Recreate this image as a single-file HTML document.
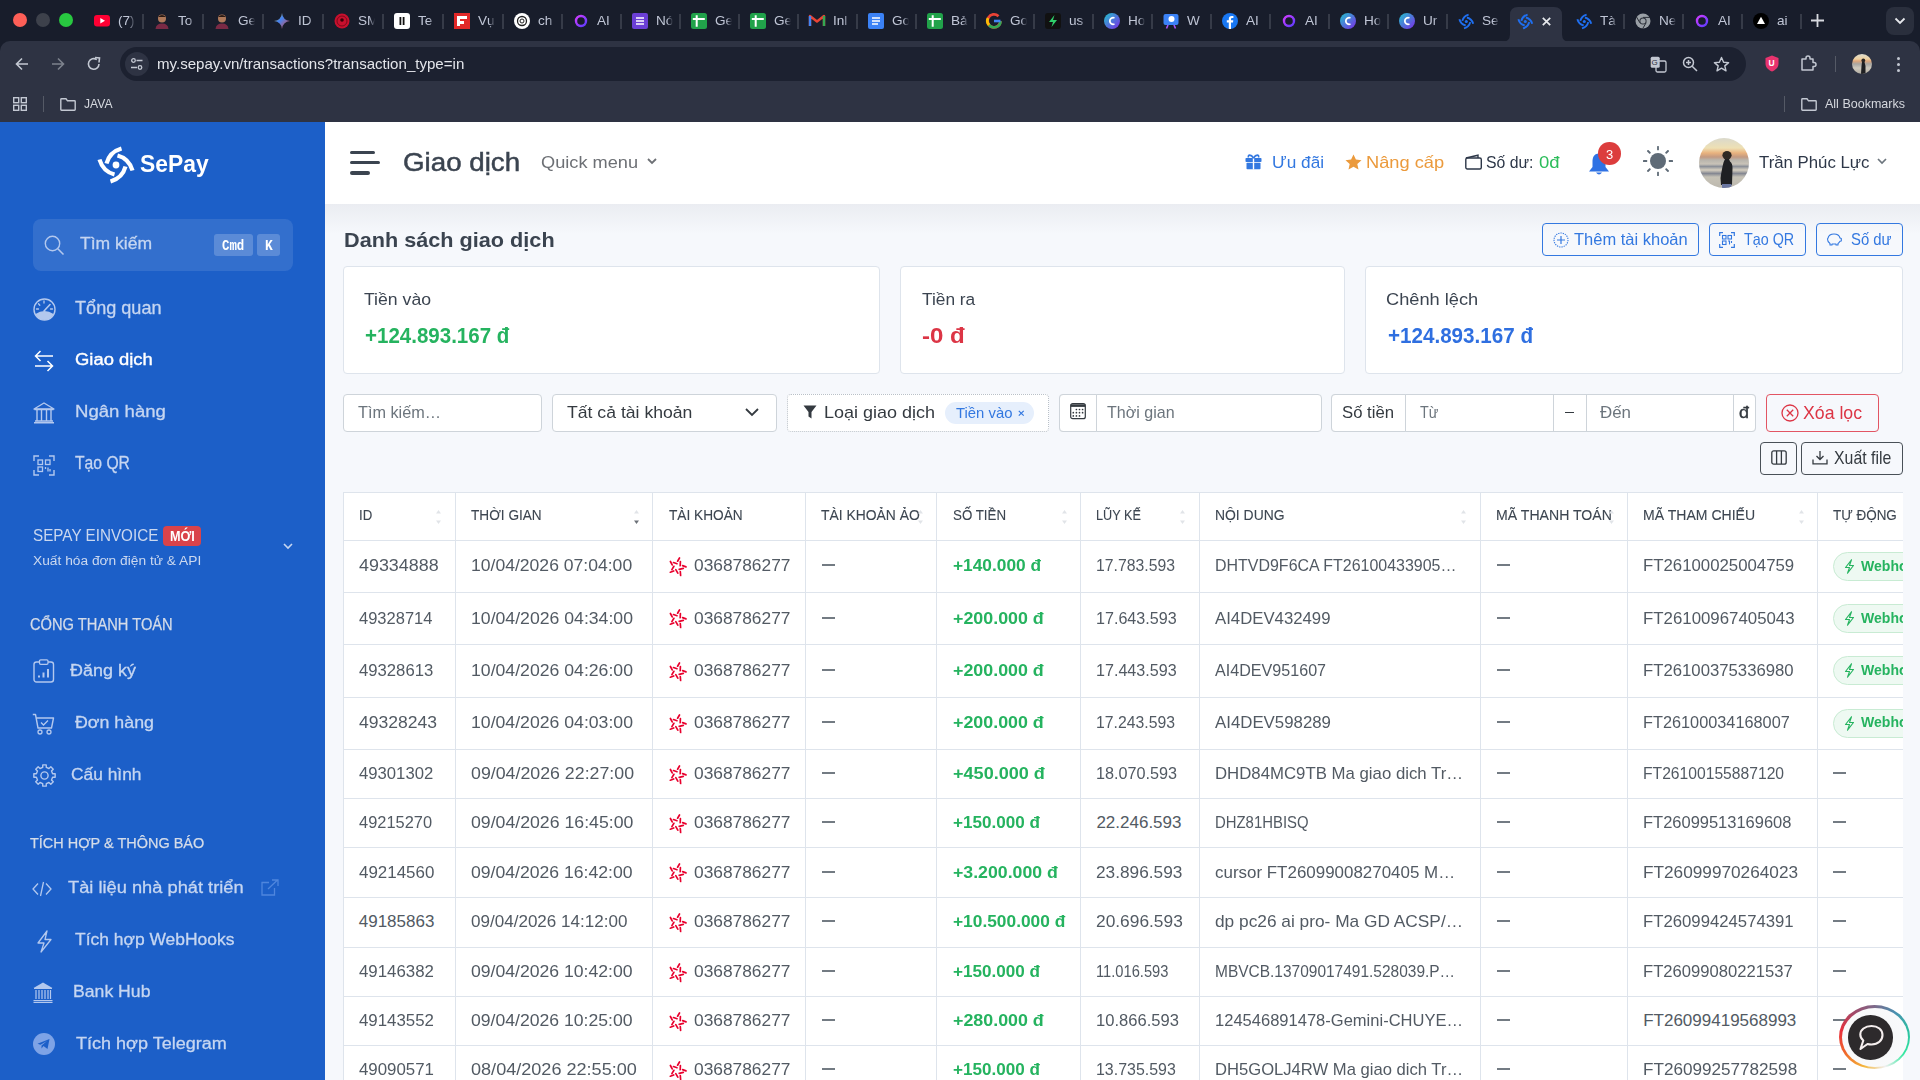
<!DOCTYPE html>
<html><head><meta charset="utf-8"><style>
html,body{margin:0;padding:0;width:1920px;height:1080px;overflow:hidden;background:#f6f8fc;font-family:"Liberation Sans", sans-serif;}
.t{position:absolute;white-space:pre;line-height:1;transform-origin:0 0;}
svg{overflow:visible}
</style></head><body>
<div style="position:absolute;left:0.00px;top:0.00px;width:1920.00px;height:60.00px;background:#181d2b"></div>
<div style="position:absolute;left:0.00px;top:41.00px;width:1920.00px;height:81.00px;background:#2e3343;border-radius:10px 10px 0 0"></div>
<div style="position:absolute;left:13.00px;top:13.00px;width:14.00px;height:14.00px;background:#fe5f57;border-radius:50%"></div>
<div style="position:absolute;left:36.00px;top:13.00px;width:14.00px;height:14.00px;background:#3d414b;border-radius:50%"></div>
<div style="position:absolute;left:59.00px;top:13.00px;width:14.00px;height:14.00px;background:#28c840;border-radius:50%"></div>
<svg style="position:absolute;left:94.00px;top:14.50px;" width="16" height="12" viewBox="0 0 16 12"><rect x="0" y="0" width="16" height="11.5" rx="3" fill="#ff0033"/><path d="M6.3 3 L11 5.8 L6.3 8.6 Z" fill="#fff"/></svg>
<div style="position:absolute;left:118.00px;top:10px;width:17px;height:22px;overflow:hidden;-webkit-mask-image:linear-gradient(to right,#000 65%,transparent 100%)"><div class="t" style="left:0;top:3.5px;font-size:13.6px;color:#c0c6d6;">(7)</div></div>
<div style="position:absolute;left:142.00px;top:14.00px;width:2.00px;height:15.00px;background:#363b48"></div>
<svg style="position:absolute;left:154.00px;top:12.50px;" width="16" height="16" viewBox="0 0 16 16"><circle cx="8" cy="5.5" r="4" fill="#b07a5a"/><path d="M4 4 Q8 0 12 4" fill="#2a1a14"/><path d="M1.5 16 Q2 10.5 8 10.5 Q14 10.5 14.5 16 Z" fill="#7a2a45"/></svg>
<div style="position:absolute;left:178.00px;top:10px;width:17px;height:22px;overflow:hidden;-webkit-mask-image:linear-gradient(to right,#000 65%,transparent 100%)"><div class="t" style="left:0;top:3.5px;font-size:13.6px;color:#c0c6d6;">To</div></div>
<div style="position:absolute;left:202.00px;top:14.00px;width:2.00px;height:15.00px;background:#363b48"></div>
<svg style="position:absolute;left:214.00px;top:12.50px;" width="16" height="16" viewBox="0 0 16 16"><circle cx="8" cy="5.5" r="4" fill="#b07a5a"/><path d="M4 4 Q8 0 12 4" fill="#2a1a14"/><path d="M1.5 16 Q2 10.5 8 10.5 Q14 10.5 14.5 16 Z" fill="#7a2a45"/></svg>
<div style="position:absolute;left:238.00px;top:10px;width:17px;height:22px;overflow:hidden;-webkit-mask-image:linear-gradient(to right,#000 65%,transparent 100%)"><div class="t" style="left:0;top:3.5px;font-size:13.6px;color:#c0c6d6;">Ge</div></div>
<div style="position:absolute;left:262.00px;top:14.00px;width:2.00px;height:15.00px;background:#363b48"></div>
<svg style="position:absolute;left:274.00px;top:12.50px;" width="16" height="16" viewBox="0 0 16 16"><defs><linearGradient id="gg" x1="0" y1="0" x2="1" y2="1"><stop offset="0" stop-color="#f4b400"/><stop offset="0.4" stop-color="#4285f4"/><stop offset="1" stop-color="#ea4335"/></linearGradient></defs><path d="M8 0 Q8.8 7.2 16 8 Q8.8 8.8 8 16 Q7.2 8.8 0 8 Q7.2 7.2 8 0 Z" fill="url(#gg)"/></svg>
<div style="position:absolute;left:298.00px;top:10px;width:17px;height:22px;overflow:hidden;-webkit-mask-image:linear-gradient(to right,#000 65%,transparent 100%)"><div class="t" style="left:0;top:3.5px;font-size:13.6px;color:#c0c6d6;">ID</div></div>
<div style="position:absolute;left:322.00px;top:14.00px;width:2.00px;height:15.00px;background:#363b48"></div>
<svg style="position:absolute;left:334.00px;top:12.50px;" width="16" height="16" viewBox="0 0 16 16"><circle cx="8" cy="8" r="7.5" fill="#c8102e"/><circle cx="8" cy="8" r="5" fill="none" stroke="#7a0a18" stroke-width="1"/><circle cx="8" cy="7" r="1.8" fill="#3a0008"/></svg>
<div style="position:absolute;left:358.00px;top:10px;width:17px;height:22px;overflow:hidden;-webkit-mask-image:linear-gradient(to right,#000 65%,transparent 100%)"><div class="t" style="left:0;top:3.5px;font-size:13.6px;color:#c0c6d6;">SM</div></div>
<div style="position:absolute;left:382.00px;top:14.00px;width:2.00px;height:15.00px;background:#363b48"></div>
<svg style="position:absolute;left:394.00px;top:12.50px;" width="16" height="16" viewBox="0 0 16 16"><rect width="16" height="16" rx="3" fill="#fff"/><rect x="5.5" y="4" width="1.8" height="8" fill="#111"/><rect x="8.7" y="4" width="1.8" height="8" fill="#111"/></svg>
<div style="position:absolute;left:418.00px;top:10px;width:17px;height:22px;overflow:hidden;-webkit-mask-image:linear-gradient(to right,#000 65%,transparent 100%)"><div class="t" style="left:0;top:3.5px;font-size:13.6px;color:#c0c6d6;">Te</div></div>
<div style="position:absolute;left:442.00px;top:14.00px;width:2.00px;height:15.00px;background:#363b48"></div>
<svg style="position:absolute;left:454.00px;top:12.50px;" width="16" height="16" viewBox="0 0 16 16"><rect width="16" height="16" fill="#e12828"/><path d="M3 3 H13 V6 H6 V8 H10 V11 H6 V13 H3 Z" fill="#fff"/></svg>
<div style="position:absolute;left:478.00px;top:10px;width:17px;height:22px;overflow:hidden;-webkit-mask-image:linear-gradient(to right,#000 65%,transparent 100%)"><div class="t" style="left:0;top:3.5px;font-size:13.6px;color:#c0c6d6;">Vụ</div></div>
<div style="position:absolute;left:502.00px;top:14.00px;width:2.00px;height:15.00px;background:#363b48"></div>
<svg style="position:absolute;left:514.00px;top:12.50px;" width="16" height="16" viewBox="0 0 16 16"><circle cx="8" cy="8" r="8" fill="#fff"/><circle cx="8" cy="8" r="4.5" fill="none" stroke="#222" stroke-width="1.3"/><circle cx="8" cy="8" r="2" fill="none" stroke="#222" stroke-width="1"/></svg>
<div style="position:absolute;left:538.00px;top:10px;width:17px;height:22px;overflow:hidden;-webkit-mask-image:linear-gradient(to right,#000 65%,transparent 100%)"><div class="t" style="left:0;top:3.5px;font-size:13.6px;color:#c0c6d6;">ch</div></div>
<div style="position:absolute;left:561.00px;top:14.00px;width:2.00px;height:15.00px;background:#363b48"></div>
<svg style="position:absolute;left:573.00px;top:12.50px;" width="16" height="16" viewBox="0 0 16 16"><defs><linearGradient id="rg" x1="0" y1="0" x2="1" y2="1"><stop offset="0" stop-color="#d23cff"/><stop offset="1" stop-color="#5b3cff"/></linearGradient></defs><circle cx="8" cy="8" r="5" fill="none" stroke="url(#rg)" stroke-width="2.4"/></svg>
<div style="position:absolute;left:597.00px;top:10px;width:17px;height:22px;overflow:hidden;-webkit-mask-image:linear-gradient(to right,#000 65%,transparent 100%)"><div class="t" style="left:0;top:3.5px;font-size:13.6px;color:#c0c6d6;">AI</div></div>
<div style="position:absolute;left:620.00px;top:14.00px;width:2.00px;height:15.00px;background:#363b48"></div>
<svg style="position:absolute;left:632.00px;top:12.50px;" width="16" height="16" viewBox="0 0 16 16"><rect width="16" height="16" rx="2" fill="#6b3fd6"/><path d="M4 5 H12 M4 8 H12 M4 11 H12" stroke="#fff" stroke-width="1.4"/></svg>
<div style="position:absolute;left:656.00px;top:10px;width:17px;height:22px;overflow:hidden;-webkit-mask-image:linear-gradient(to right,#000 65%,transparent 100%)"><div class="t" style="left:0;top:3.5px;font-size:13.6px;color:#c0c6d6;">Nó</div></div>
<div style="position:absolute;left:679.00px;top:14.00px;width:2.00px;height:15.00px;background:#363b48"></div>
<svg style="position:absolute;left:691.00px;top:12.50px;" width="16" height="16" viewBox="0 0 16 16"><rect width="16" height="16" rx="2.5" fill="#21a24a"/><path d="M1.8 5.9 H13.8 M5.7 2.2 V13.8" stroke="#fff" stroke-width="2"/></svg>
<div style="position:absolute;left:715.00px;top:10px;width:17px;height:22px;overflow:hidden;-webkit-mask-image:linear-gradient(to right,#000 65%,transparent 100%)"><div class="t" style="left:0;top:3.5px;font-size:13.6px;color:#c0c6d6;">Ge</div></div>
<div style="position:absolute;left:738.00px;top:14.00px;width:2.00px;height:15.00px;background:#363b48"></div>
<svg style="position:absolute;left:750.00px;top:12.50px;" width="16" height="16" viewBox="0 0 16 16"><rect width="16" height="16" rx="2.5" fill="#21a24a"/><path d="M1.8 5.9 H13.8 M5.7 2.2 V13.8" stroke="#fff" stroke-width="2"/></svg>
<div style="position:absolute;left:774.00px;top:10px;width:17px;height:22px;overflow:hidden;-webkit-mask-image:linear-gradient(to right,#000 65%,transparent 100%)"><div class="t" style="left:0;top:3.5px;font-size:13.6px;color:#c0c6d6;">Ge</div></div>
<div style="position:absolute;left:797.00px;top:14.00px;width:2.00px;height:15.00px;background:#363b48"></div>
<svg style="position:absolute;left:809.00px;top:14.00px;" width="16" height="13" viewBox="0 0 16 13"><path d="M1 12 V2 L8 7.5 L15 2 V12" fill="none" stroke="#ea4335" stroke-width="2.4" stroke-linejoin="round"/><path d="M1 12 V2" stroke="#4285f4" stroke-width="2.4"/><path d="M15 12 V2" stroke="#34a853" stroke-width="2.4"/></svg>
<div style="position:absolute;left:833.00px;top:10px;width:17px;height:22px;overflow:hidden;-webkit-mask-image:linear-gradient(to right,#000 65%,transparent 100%)"><div class="t" style="left:0;top:3.5px;font-size:13.6px;color:#c0c6d6;">Inl</div></div>
<div style="position:absolute;left:856.00px;top:14.00px;width:2.00px;height:15.00px;background:#363b48"></div>
<svg style="position:absolute;left:868.00px;top:12.50px;" width="16" height="16" viewBox="0 0 16 16"><rect width="16" height="16" rx="2" fill="#3b82f6"/><path d="M4 5 H12 M4 8 H12 M4 11 H10" stroke="#fff" stroke-width="1.5"/></svg>
<div style="position:absolute;left:892.00px;top:10px;width:17px;height:22px;overflow:hidden;-webkit-mask-image:linear-gradient(to right,#000 65%,transparent 100%)"><div class="t" style="left:0;top:3.5px;font-size:13.6px;color:#c0c6d6;">Go</div></div>
<div style="position:absolute;left:915.00px;top:14.00px;width:2.00px;height:15.00px;background:#363b48"></div>
<svg style="position:absolute;left:927.00px;top:12.50px;" width="16" height="16" viewBox="0 0 16 16"><rect width="16" height="16" rx="2.5" fill="#21a24a"/><path d="M1.8 5.9 H13.8 M5.7 2.2 V13.8" stroke="#fff" stroke-width="2"/></svg>
<div style="position:absolute;left:951.00px;top:10px;width:17px;height:22px;overflow:hidden;-webkit-mask-image:linear-gradient(to right,#000 65%,transparent 100%)"><div class="t" style="left:0;top:3.5px;font-size:13.6px;color:#c0c6d6;">Bả</div></div>
<div style="position:absolute;left:974.00px;top:14.00px;width:2.00px;height:15.00px;background:#363b48"></div>
<svg style="position:absolute;left:986.00px;top:12.50px;" width="16" height="16" viewBox="0 0 16 16"><path d="M14.5 8.2 A6.5 6.5 0 1 1 12.5 3.2" fill="none" stroke="#ea4335" stroke-width="2.8"/><path d="M14.5 8.2 A6.5 6.5 0 0 1 3 12" fill="none" stroke="#34a853" stroke-width="2.8"/><path d="M3 12 A6.5 6.5 0 0 1 2 5" fill="none" stroke="#fbbc05" stroke-width="2.8"/><path d="M8 8 H14.5" stroke="#4285f4" stroke-width="2.6"/></svg>
<div style="position:absolute;left:1010.00px;top:10px;width:17px;height:22px;overflow:hidden;-webkit-mask-image:linear-gradient(to right,#000 65%,transparent 100%)"><div class="t" style="left:0;top:3.5px;font-size:13.6px;color:#c0c6d6;">Go</div></div>
<div style="position:absolute;left:1033.00px;top:14.00px;width:2.00px;height:15.00px;background:#363b48"></div>
<svg style="position:absolute;left:1045.00px;top:12.50px;" width="16" height="16" viewBox="0 0 16 16"><rect width="16" height="16" rx="3" fill="#111"/><path d="M9.5 2 L4 9 H8 L6.5 14 L12 7 H8 Z" fill="#2fd06b"/></svg>
<div style="position:absolute;left:1069.00px;top:10px;width:17px;height:22px;overflow:hidden;-webkit-mask-image:linear-gradient(to right,#000 65%,transparent 100%)"><div class="t" style="left:0;top:3.5px;font-size:13.6px;color:#c0c6d6;">us</div></div>
<div style="position:absolute;left:1092.00px;top:14.00px;width:2.00px;height:15.00px;background:#363b48"></div>
<svg style="position:absolute;left:1104.00px;top:12.50px;" width="16" height="16" viewBox="0 0 16 16"><defs><linearGradient id="cg" x1="0" y1="0" x2="1" y2="1"><stop offset="0" stop-color="#20c4cb"/><stop offset="1" stop-color="#7d2ae8"/></linearGradient></defs><circle cx="8" cy="8" r="8" fill="url(#cg)"/><path d="M10.5 5 A3.3 3.3 0 1 0 10.5 11" fill="none" stroke="#fff" stroke-width="1.8"/></svg>
<div style="position:absolute;left:1128.00px;top:10px;width:17px;height:22px;overflow:hidden;-webkit-mask-image:linear-gradient(to right,#000 65%,transparent 100%)"><div class="t" style="left:0;top:3.5px;font-size:13.6px;color:#c0c6d6;">Ho</div></div>
<div style="position:absolute;left:1151.00px;top:14.00px;width:2.00px;height:15.00px;background:#363b48"></div>
<svg style="position:absolute;left:1163.00px;top:12.50px;" width="16" height="16" viewBox="0 0 16 16"><rect x="0.5" y="1" width="15" height="11" rx="2" fill="#3b82f6"/><circle cx="8.5" cy="6" r="3" fill="#fff"/><path d="M5 12 L3.5 15.5 M11 12 L12.5 15.5" stroke="#a855f7" stroke-width="1.6"/></svg>
<div style="position:absolute;left:1187.00px;top:10px;width:17px;height:22px;overflow:hidden;-webkit-mask-image:linear-gradient(to right,#000 65%,transparent 100%)"><div class="t" style="left:0;top:3.5px;font-size:13.6px;color:#c0c6d6;">W</div></div>
<div style="position:absolute;left:1210.00px;top:14.00px;width:2.00px;height:15.00px;background:#363b48"></div>
<svg style="position:absolute;left:1222.00px;top:12.50px;" width="16" height="16" viewBox="0 0 16 16"><circle cx="8" cy="8" r="8" fill="#1877f2"/><path d="M9 16 V9.5 H11 L11.3 7.3 H9 V6 Q9 5 10 5 H11.4 V3.1 Q10.6 3 9.7 3 Q6.8 3 6.8 6 V7.3 H4.8 V9.5 H6.8 V16 Z" fill="#fff"/></svg>
<div style="position:absolute;left:1246.00px;top:10px;width:17px;height:22px;overflow:hidden;-webkit-mask-image:linear-gradient(to right,#000 65%,transparent 100%)"><div class="t" style="left:0;top:3.5px;font-size:13.6px;color:#c0c6d6;">AI</div></div>
<div style="position:absolute;left:1269.00px;top:14.00px;width:2.00px;height:15.00px;background:#363b48"></div>
<svg style="position:absolute;left:1281.00px;top:12.50px;" width="16" height="16" viewBox="0 0 16 16"><defs><linearGradient id="rg" x1="0" y1="0" x2="1" y2="1"><stop offset="0" stop-color="#d23cff"/><stop offset="1" stop-color="#5b3cff"/></linearGradient></defs><circle cx="8" cy="8" r="5" fill="none" stroke="url(#rg)" stroke-width="2.4"/></svg>
<div style="position:absolute;left:1305.00px;top:10px;width:17px;height:22px;overflow:hidden;-webkit-mask-image:linear-gradient(to right,#000 65%,transparent 100%)"><div class="t" style="left:0;top:3.5px;font-size:13.6px;color:#c0c6d6;">AI</div></div>
<div style="position:absolute;left:1328.00px;top:14.00px;width:2.00px;height:15.00px;background:#363b48"></div>
<svg style="position:absolute;left:1340.00px;top:12.50px;" width="16" height="16" viewBox="0 0 16 16"><defs><linearGradient id="cg" x1="0" y1="0" x2="1" y2="1"><stop offset="0" stop-color="#20c4cb"/><stop offset="1" stop-color="#7d2ae8"/></linearGradient></defs><circle cx="8" cy="8" r="8" fill="url(#cg)"/><path d="M10.5 5 A3.3 3.3 0 1 0 10.5 11" fill="none" stroke="#fff" stroke-width="1.8"/></svg>
<div style="position:absolute;left:1364.00px;top:10px;width:17px;height:22px;overflow:hidden;-webkit-mask-image:linear-gradient(to right,#000 65%,transparent 100%)"><div class="t" style="left:0;top:3.5px;font-size:13.6px;color:#c0c6d6;">Ho</div></div>
<div style="position:absolute;left:1387.00px;top:14.00px;width:2.00px;height:15.00px;background:#363b48"></div>
<svg style="position:absolute;left:1399.00px;top:12.50px;" width="16" height="16" viewBox="0 0 16 16"><defs><linearGradient id="cg" x1="0" y1="0" x2="1" y2="1"><stop offset="0" stop-color="#20c4cb"/><stop offset="1" stop-color="#7d2ae8"/></linearGradient></defs><circle cx="8" cy="8" r="8" fill="url(#cg)"/><path d="M10.5 5 A3.3 3.3 0 1 0 10.5 11" fill="none" stroke="#fff" stroke-width="1.8"/></svg>
<div style="position:absolute;left:1423.00px;top:10px;width:17px;height:22px;overflow:hidden;-webkit-mask-image:linear-gradient(to right,#000 65%,transparent 100%)"><div class="t" style="left:0;top:3.5px;font-size:13.6px;color:#c0c6d6;">Ur</div></div>
<div style="position:absolute;left:1446.00px;top:14.00px;width:2.00px;height:15.00px;background:#363b48"></div>
<svg style="position:absolute;left:1458.00px;top:12.50px;" width="16" height="16" viewBox="0 0 16 16"><g transform="translate(8.3 8.5) scale(0.42)"><g transform="rotate(0)"><path d="M-9.5 -1.5 Q-6.5 -13 5.5 -16.5" stroke="#1f6ff0" stroke-width="4.6" fill="none"/></g><g transform="rotate(90)"><path d="M-9.5 -1.5 Q-6.5 -13 5.5 -16.5" stroke="#1f6ff0" stroke-width="4.6" fill="none"/></g><g transform="rotate(180)"><path d="M-9.5 -1.5 Q-6.5 -13 5.5 -16.5" stroke="#1f6ff0" stroke-width="4.6" fill="none"/></g><g transform="rotate(270)"><path d="M-9.5 -1.5 Q-6.5 -13 5.5 -16.5" stroke="#1f6ff0" stroke-width="4.6" fill="none"/></g><circle r="3.6" fill="#1f6ff0"/></g></svg>
<div style="position:absolute;left:1482.00px;top:10px;width:17px;height:22px;overflow:hidden;-webkit-mask-image:linear-gradient(to right,#000 65%,transparent 100%)"><div class="t" style="left:0;top:3.5px;font-size:13.6px;color:#c0c6d6;">Se</div></div>
<svg style="position:absolute;left:1502.00px;top:7px" width="68" height="35" viewBox="0 0 68 35"><path d="M0 35 Q8 35 8 27 L8 8 Q8 0 16 0 L52 0 Q60 0 60 8 L60 27 Q60 35 68 35 Z" fill="#2e3343"/></svg>
<svg style="position:absolute;left:1517.00px;top:12.50px;" width="16" height="16" viewBox="0 0 16 16"><g transform="translate(8.3 8.5) scale(0.42)"><g transform="rotate(0)"><path d="M-9.5 -1.5 Q-6.5 -13 5.5 -16.5" stroke="#1f6ff0" stroke-width="4.6" fill="none"/></g><g transform="rotate(90)"><path d="M-9.5 -1.5 Q-6.5 -13 5.5 -16.5" stroke="#1f6ff0" stroke-width="4.6" fill="none"/></g><g transform="rotate(180)"><path d="M-9.5 -1.5 Q-6.5 -13 5.5 -16.5" stroke="#1f6ff0" stroke-width="4.6" fill="none"/></g><g transform="rotate(270)"><path d="M-9.5 -1.5 Q-6.5 -13 5.5 -16.5" stroke="#1f6ff0" stroke-width="4.6" fill="none"/></g><circle r="3.6" fill="#1f6ff0"/></g></svg>
<svg style="position:absolute;left:1541.50px;top:16.50px;" width="9" height="9" viewBox="0 0 9 9"><path d="M0.8 0.8 L8.2 8.2 M8.2 0.8 L0.8 8.2" stroke="#e6e8ec" stroke-width="1.7"/></svg>
<svg style="position:absolute;left:1576.00px;top:12.50px;" width="16" height="16" viewBox="0 0 16 16"><g transform="translate(8.3 8.5) scale(0.42)"><g transform="rotate(0)"><path d="M-9.5 -1.5 Q-6.5 -13 5.5 -16.5" stroke="#1f6ff0" stroke-width="4.6" fill="none"/></g><g transform="rotate(90)"><path d="M-9.5 -1.5 Q-6.5 -13 5.5 -16.5" stroke="#1f6ff0" stroke-width="4.6" fill="none"/></g><g transform="rotate(180)"><path d="M-9.5 -1.5 Q-6.5 -13 5.5 -16.5" stroke="#1f6ff0" stroke-width="4.6" fill="none"/></g><g transform="rotate(270)"><path d="M-9.5 -1.5 Q-6.5 -13 5.5 -16.5" stroke="#1f6ff0" stroke-width="4.6" fill="none"/></g><circle r="3.6" fill="#1f6ff0"/></g></svg>
<div style="position:absolute;left:1600.00px;top:10px;width:17px;height:22px;overflow:hidden;-webkit-mask-image:linear-gradient(to right,#000 65%,transparent 100%)"><div class="t" style="left:0;top:3.5px;font-size:13.6px;color:#c0c6d6;">Tà</div></div>
<div style="position:absolute;left:1623.00px;top:14.00px;width:2.00px;height:15.00px;background:#363b48"></div>
<svg style="position:absolute;left:1635.00px;top:12.50px;" width="16" height="16" viewBox="0 0 16 16"><circle cx="8" cy="8" r="7.5" fill="#9aa0a6"/><circle cx="8" cy="8" r="3.6" fill="#2b2f38"/><circle cx="8" cy="8" r="2.6" fill="#9aa0a6"/><path d="M8 4.4 H15 M4.9 9.8 L1.4 3.8 M11.1 9.8 L7.6 15.8" stroke="#2b2f38" stroke-width="1"/></svg>
<div style="position:absolute;left:1659.00px;top:10px;width:17px;height:22px;overflow:hidden;-webkit-mask-image:linear-gradient(to right,#000 65%,transparent 100%)"><div class="t" style="left:0;top:3.5px;font-size:13.6px;color:#c0c6d6;">Ne</div></div>
<div style="position:absolute;left:1682.00px;top:14.00px;width:2.00px;height:15.00px;background:#363b48"></div>
<svg style="position:absolute;left:1694.00px;top:12.50px;" width="16" height="16" viewBox="0 0 16 16"><defs><linearGradient id="rg" x1="0" y1="0" x2="1" y2="1"><stop offset="0" stop-color="#d23cff"/><stop offset="1" stop-color="#5b3cff"/></linearGradient></defs><circle cx="8" cy="8" r="5" fill="none" stroke="url(#rg)" stroke-width="2.4"/></svg>
<div style="position:absolute;left:1718.00px;top:10px;width:17px;height:22px;overflow:hidden;-webkit-mask-image:linear-gradient(to right,#000 65%,transparent 100%)"><div class="t" style="left:0;top:3.5px;font-size:13.6px;color:#c0c6d6;">AI</div></div>
<div style="position:absolute;left:1741.00px;top:14.00px;width:2.00px;height:15.00px;background:#363b48"></div>
<svg style="position:absolute;left:1753.00px;top:12.50px;" width="16" height="16" viewBox="0 0 16 16"><circle cx="8" cy="8" r="8" fill="#000"/><path d="M8 3.8 L12 11 H4 Z" fill="#fff"/></svg>
<div style="position:absolute;left:1777.00px;top:10px;width:17px;height:22px;overflow:hidden;-webkit-mask-image:linear-gradient(to right,#000 65%,transparent 100%)"><div class="t" style="left:0;top:3.5px;font-size:13.6px;color:#c0c6d6;">ai</div></div>
<div style="position:absolute;left:1800.00px;top:14.00px;width:2.00px;height:15.00px;background:#363b48"></div>
<svg style="position:absolute;left:1810.00px;top:13.00px;" width="15" height="15" viewBox="0 0 15 15"><path d="M7.5 1 V14 M1 7.5 H14" stroke="#d7dae0" stroke-width="1.8"/></svg>
<div style="position:absolute;left:1886.00px;top:7.00px;width:28.00px;height:28.00px;background:#2a2f3d;border-radius:8px"></div>
<svg style="position:absolute;left:1894.00px;top:17.00px;" width="12" height="8" viewBox="0 0 12 8"><path d="M1.5 1.5 L6 6 L10.5 1.5" stroke="#e6e8ec" stroke-width="1.8" fill="none"/></svg>
<svg style="position:absolute;left:15.00px;top:57.00px;" width="14" height="14" viewBox="0 0 14 14"><path d="M13 7 H2 M7 1.5 L1.5 7 L7 12.5" stroke="#c3c8d2" stroke-width="1.6" fill="none"/></svg>
<svg style="position:absolute;left:51.00px;top:57.00px;" width="14" height="14" viewBox="0 0 14 14"><path d="M1 7 H12 M7 1.5 L12.5 7 L7 12.5" stroke="#7d828d" stroke-width="1.6" fill="none"/></svg>
<svg style="position:absolute;left:87.00px;top:57.00px;" width="14" height="14" viewBox="0 0 14 14"><path d="M12 7 A5.3 5.3 0 1 1 9.8 2.6" stroke="#c3c8d2" stroke-width="1.6" fill="none"/><path d="M8 0.5 L12.5 1 L12 5.5" stroke="#c3c8d2" stroke-width="1.6" fill="none"/></svg>
<div style="position:absolute;left:120.00px;top:47.00px;width:1626.00px;height:34.00px;background:#1c2130;border-radius:17px"></div>
<div style="position:absolute;left:125.00px;top:52.00px;width:24.00px;height:24.00px;background:#2e3343;border-radius:50%"></div>
<svg style="position:absolute;left:130.00px;top:57.00px;" width="14" height="14" viewBox="0 0 14 14"><circle cx="3.5" cy="3.5" r="1.8" stroke="#c3c8d2" stroke-width="1.3" fill="none"/><path d="M6.5 3.5 H12.5 M1 10.5 H7" stroke="#c3c8d2" stroke-width="1.3"/><circle cx="10" cy="10.5" r="1.8" stroke="#c3c8d2" stroke-width="1.3" fill="none"/></svg>
<div class="t" style="left:157.00px;top:56.75px;font-size:14.97px;color:#e3e5ea;transform:scaleX(1.0067);">my.sepay.vn/transactions?transaction_type=in</div>
<svg style="position:absolute;left:1650.00px;top:56.00px;" width="17" height="17" viewBox="0 0 17 17"><rect x="0.7" y="0.7" width="9" height="11" rx="1.5" fill="#c3c8d2"/><rect x="6" y="5" width="10" height="11" rx="1.5" fill="none" stroke="#c3c8d2" stroke-width="1.3"/><text x="1.5" y="9" font-size="8" fill="#2c313e" font-family="Liberation Sans">G</text></svg>
<svg style="position:absolute;left:1682.00px;top:56.00px;" width="17" height="17" viewBox="0 0 17 17"><circle cx="6.5" cy="6.5" r="5" stroke="#c3c8d2" stroke-width="1.5" fill="none"/><path d="M10.2 10.2 L15 15 M6.5 4 V9 M4 6.5 H9" stroke="#c3c8d2" stroke-width="1.5"/></svg>
<svg style="position:absolute;left:1713.00px;top:56.00px;" width="17" height="17" viewBox="0 0 17 17"><path d="M8.5 1.5 L10.6 6.2 L15.6 6.6 L11.8 9.9 L13 14.8 L8.5 12.2 L4 14.8 L5.2 9.9 L1.4 6.6 L6.4 6.2 Z" stroke="#c3c8d2" stroke-width="1.4" fill="none" stroke-linejoin="round"/></svg>
<svg style="position:absolute;left:1765.00px;top:55.00px;" width="14" height="17" viewBox="0 0 14 17"><path d="M7 0.5 L13.5 3 V8.5 C13.5 12.5 10.5 15 7 16.5 C3.5 15 0.5 12.5 0.5 8.5 V3 Z" fill="#e8336e"/><text x="3.6" y="11.2" font-size="8.5" font-weight="bold" fill="#fff" font-family="Liberation Sans">U</text></svg>
<svg style="position:absolute;left:1800.00px;top:55.00px;" width="17" height="17" viewBox="0 0 17 17"><path d="M2 4 H6 V3 A2 2 0 0 1 10 3 V4 H13 V7.5 H14 A2 2 0 0 1 14 11.5 H13 V15 H2 Z" stroke="#c3c8d2" stroke-width="1.5" fill="none" stroke-linejoin="round"/></svg>
<div style="position:absolute;left:1835.00px;top:56.00px;width:1.00px;height:16.00px;background:#555a66"></div>
<svg style="position:absolute;left:1852.00px;top:54.00px;" width="20" height="20" viewBox="0 0 20 20"><defs><clipPath id="avs"><circle cx="10" cy="10" r="10"/></clipPath><linearGradient id="avsg" x1="0" y1="0" x2="0" y2="1"><stop offset="0" stop-color="#dcdccf"/><stop offset="0.25" stop-color="#f0d2a0"/><stop offset="0.35" stop-color="#e0a67a"/><stop offset="0.5" stop-color="#a8a6a2"/><stop offset="0.7" stop-color="#cfc9bc"/><stop offset="1" stop-color="#b0aca2"/></linearGradient></defs><g clip-path="url(#avs)"><rect width="20" height="20" fill="url(#avsg)"/><circle cx="11.3" cy="6.5" r="1.9" fill="#2a2624"/><path d="M10 8 H12.5 L13.5 12 V20 H9 L9.5 12 Z" fill="#1e1f22"/></g></svg>
<div style="position:absolute;left:1896.50px;top:56.50px;width:3.00px;height:3.00px;background:#c3c8d2;border-radius:50%"></div>
<div style="position:absolute;left:1896.50px;top:62.50px;width:3.00px;height:3.00px;background:#c3c8d2;border-radius:50%"></div>
<div style="position:absolute;left:1896.50px;top:68.50px;width:3.00px;height:3.00px;background:#c3c8d2;border-radius:50%"></div>
<svg style="position:absolute;left:13.00px;top:97.00px;" width="14" height="14" viewBox="0 0 14 14"><rect x="0.7" y="0.7" width="5" height="5" stroke="#c3c8d2" stroke-width="1.4" fill="none"/><rect x="8.3" y="0.7" width="5" height="5" stroke="#c3c8d2" stroke-width="1.4" fill="none"/><rect x="0.7" y="8.3" width="5" height="5" stroke="#c3c8d2" stroke-width="1.4" fill="none"/><rect x="8.3" y="8.3" width="5" height="5" stroke="#c3c8d2" stroke-width="1.4" fill="none"/></svg>
<div style="position:absolute;left:43.00px;top:96.00px;width:1.00px;height:16.00px;background:#555a66"></div>
<svg style="position:absolute;left:60.00px;top:97.50px;" width="16" height="13" viewBox="0 0 16 13"><path d="M0.8 1.5 Q0.8 0.8 1.5 0.8 H6 L7.5 2.8 H14.5 Q15.2 2.8 15.2 3.5 V11.5 Q15.2 12.2 14.5 12.2 H1.5 Q0.8 12.2 0.8 11.5 Z" stroke="#c3c8d2" stroke-width="1.4" fill="none"/></svg>
<div class="t" style="left:84.00px;top:97.80px;font-size:12.79px;color:#d5d8de;transform:scaleX(0.9472);">JAVA</div>
<div style="position:absolute;left:1784.00px;top:96.00px;width:1.00px;height:16.00px;background:#555a66"></div>
<svg style="position:absolute;left:1801.00px;top:97.50px;" width="16" height="13" viewBox="0 0 16 13"><path d="M0.8 1.5 Q0.8 0.8 1.5 0.8 H6 L7.5 2.8 H14.5 Q15.2 2.8 15.2 3.5 V11.5 Q15.2 12.2 14.5 12.2 H1.5 Q0.8 12.2 0.8 11.5 Z" stroke="#c3c8d2" stroke-width="1.4" fill="none"/></svg>
<div class="t" style="left:1825.00px;top:97.80px;font-size:12.79px;color:#d5d8de;transform:scaleX(0.9788);">All Bookmarks</div>
<div style="position:absolute;left:0.00px;top:122.00px;width:325.00px;height:958.00px;background:#1c5fc8"></div>
<svg style="position:absolute;left:95.50px;top:145.00px;" width="40" height="40" viewBox="0 0 40 40"><g transform="translate(20 20)"><g transform="rotate(0)"><path d="M-9.5 -1.5 Q-6.5 -13 5.5 -16.5" stroke="#fff" stroke-width="4.2" fill="none"/></g><g transform="rotate(90)"><path d="M-9.5 -1.5 Q-6.5 -13 5.5 -16.5" stroke="#fff" stroke-width="4.2" fill="none"/></g><g transform="rotate(180)"><path d="M-9.5 -1.5 Q-6.5 -13 5.5 -16.5" stroke="#fff" stroke-width="4.2" fill="none"/></g><g transform="rotate(270)"><path d="M-9.5 -1.5 Q-6.5 -13 5.5 -16.5" stroke="#fff" stroke-width="4.2" fill="none"/></g><circle r="3.4" fill="#fff"/></g></svg>
<div class="t" style="left:140.30px;top:153.30px;font-size:23.69px;color:#ffffff;font-weight:bold;transform:scaleX(0.9644);">SePay</div>
<div style="position:absolute;left:33.00px;top:219.00px;width:260.00px;height:52.00px;background:rgba(255,255,255,0.1);border-radius:8px"></div>
<svg style="position:absolute;left:44.00px;top:235.00px;" width="21" height="21" viewBox="0 0 21 21"><circle cx="8.5" cy="8.5" r="7.2" stroke="#b3c8ee" stroke-width="1.4" fill="none"/><path d="M13.8 13.8 L19.5 19.5" stroke="#b3c8ee" stroke-width="1.6"/></svg>
<div class="t" style="left:79.80px;top:234.90px;font-size:17.30px;color:#c6d6f1;transform:scaleX(1.0156);-webkit-text-stroke:0.3px #c6d6f1;">Tìm kiếm</div>
<div style="position:absolute;left:214.00px;top:234.30px;width:39.00px;height:21.40px;background:rgba(255,255,255,0.2);border-radius:3px"></div>
<div style="position:absolute;left:257.00px;top:234.30px;width:23.00px;height:21.40px;background:rgba(255,255,255,0.2);border-radius:3px"></div>
<div class="t" style="left:221.90px;top:238.80px;font-size:14.57px;color:#ffffff;font-weight:bold;transform:scaleX(0.8504);font-family:'Liberation Mono', monospace;">Cmd</div>
<div class="t" style="left:264.60px;top:238.80px;font-size:14.57px;color:#ffffff;font-weight:bold;transform:scaleX(0.8887);font-family:'Liberation Mono', monospace;">K</div>
<div class="t" style="left:75.40px;top:299.90px;font-size:17.44px;color:#c6d6f1;transform:scaleX(1.0382);-webkit-text-stroke:0.3px #c6d6f1;">Tổng quan</div>
<svg style="position:absolute;left:33.00px;top:297.50px;" width="23" height="23" viewBox="0 0 23 23"><circle cx="11.5" cy="11.5" r="10.5" stroke="#b3c8ee" stroke-width="1.4" fill="none"/><path d="M2.5 16 Q11.5 10 20.5 16 Q19 21.5 11.5 22 Q4 21.5 2.5 16 Z" fill="#b3c8ee"/><path d="M11 13 L17 6.5" stroke="#b3c8ee" stroke-width="1.6" stroke-linecap="round"/><path d="M5.5 5.8 L6.8 7.3 M11 3 V5 M3.5 11 H5.5 M17.5 11 H19.5" stroke="#b3c8ee" stroke-width="1.3" stroke-linecap="round"/></svg>
<div class="t" style="left:75.00px;top:350.90px;font-size:17.30px;color:#ffffff;transform:scaleX(1.0646);-webkit-text-stroke:0.4px #fff;">Giao dịch</div>
<svg style="position:absolute;left:33.50px;top:349.50px;" width="20" height="22" viewBox="0 0 20 22"><path d="M19 6 H1.5 M6.5 1 L1.5 6 L6.5 11" stroke="#fff" stroke-width="1.5" fill="none"/><path d="M1 16 H18.5 M13.5 11 L18.5 16 L13.5 21" stroke="#fff" stroke-width="1.5" fill="none"/></svg>
<div class="t" style="left:75.00px;top:403.10px;font-size:17.30px;color:#c6d6f1;transform:scaleX(1.0754);-webkit-text-stroke:0.3px #c6d6f1;">Ngân hàng</div>
<svg style="position:absolute;left:33.00px;top:402.00px;" width="22" height="22" viewBox="0 0 22 22"><path d="M1 7 L11 1 L21 7 Z" stroke="#b3c8ee" stroke-width="1.4" fill="none" stroke-linejoin="round"/><path d="M1.5 7.5 H20.5 M1 20.8 H21 M4 8 V19 M8.5 8 V19 M13.5 8 V19 M18 8 V19 M2 19 H20" stroke="#b3c8ee" stroke-width="1.4" fill="none"/></svg>
<div class="t" style="left:75.00px;top:455.20px;font-size:17.44px;color:#c6d6f1;transform:scaleX(0.8993);-webkit-text-stroke:0.3px #c6d6f1;">Tạo QR</div>
<svg style="position:absolute;left:33.00px;top:454.50px;" width="22" height="21" viewBox="0 0 22 21"><path d="M1 6 V1 H6 M16 1 H21 V6 M21 15 V20 H16 M6 20 H1 V15" stroke="#b3c8ee" stroke-width="1.4" fill="none"/><rect x="5" y="5" width="4.5" height="4.5" stroke="#b3c8ee" stroke-width="1.3" fill="none"/><rect x="12.5" y="5" width="4.5" height="4.5" stroke="#b3c8ee" stroke-width="1.3" fill="none"/><rect x="5" y="12" width="4.5" height="4.5" stroke="#b3c8ee" stroke-width="1.3" fill="none"/><path d="M12.5 12 V14 M15 12.5 V16.5 M17 14 V16.5" stroke="#b3c8ee" stroke-width="1.3"/></svg>
<div class="t" style="left:32.90px;top:528.00px;font-size:16.57px;color:#cbd8ef;transform:scaleX(0.9201);">SEPAY EINVOICE</div>
<div style="position:absolute;left:163.00px;top:526.00px;width:37.70px;height:20.00px;background:#d9434a;border-radius:4px"></div>
<div class="t" style="left:169.60px;top:529.00px;font-size:14.39px;color:#ffffff;font-weight:bold;transform:scaleX(0.8806);">MỚI</div>
<svg style="position:absolute;left:283.00px;top:542.50px;" width="10" height="7" viewBox="0 0 10 7"><path d="M1 1 L5 5 L9 1" stroke="#c6d6f1" stroke-width="1.6" fill="none"/></svg>
<div class="t" style="left:33.00px;top:554.00px;font-size:13.08px;color:#cbd8ef;transform:scaleX(1.0526);">Xuất hóa đơn điện tử & API</div>
<div class="t" style="left:30.30px;top:617.00px;font-size:15.70px;color:#d5dce8;transform:scaleX(0.9354);-webkit-text-stroke:0.25px #d5dce8;">CỔNG THANH TOÁN</div>
<div class="t" style="left:70.30px;top:662.20px;font-size:17.30px;color:#c6d6f1;transform:scaleX(1.0404);-webkit-text-stroke:0.3px #c6d6f1;">Đăng ký</div>
<svg style="position:absolute;left:33.00px;top:658.50px;" width="22" height="24" viewBox="0 0 22 24"><rect x="1" y="3" width="19.5" height="20" rx="2.5" stroke="#b3c8ee" stroke-width="1.4" fill="none"/><rect x="6.5" y="0.8" width="8.5" height="4.5" rx="1.2" stroke="#b3c8ee" stroke-width="1.3" fill="#1c5fc8"/><path d="M6 18.5 V16.5 M10.5 18.5 V13.5 M15 18.5 V10" stroke="#b3c8ee" stroke-width="2"/></svg>
<div class="t" style="left:74.70px;top:714.30px;font-size:17.01px;color:#c6d6f1;transform:scaleX(1.0469);-webkit-text-stroke:0.3px #c6d6f1;">Đơn hàng</div>
<svg style="position:absolute;left:32.00px;top:712.50px;" width="23" height="22" viewBox="0 0 23 22"><path d="M0.8 1.5 H3.5 L6 15 H19.5 L21.5 5 H4.5" stroke="#b3c8ee" stroke-width="1.4" fill="none" stroke-linejoin="round"/><circle cx="8" cy="19" r="2" stroke="#b3c8ee" stroke-width="1.3" fill="none"/><circle cx="17" cy="19" r="2" stroke="#b3c8ee" stroke-width="1.3" fill="none"/><path d="M9 9.5 L11.5 12 L16 7.5" stroke="#b3c8ee" stroke-width="1.3" fill="none"/></svg>
<div class="t" style="left:70.80px;top:766.00px;font-size:17.01px;color:#c6d6f1;transform:scaleX(1.0211);-webkit-text-stroke:0.3px #c6d6f1;">Cấu hình</div>
<svg style="position:absolute;left:32.50px;top:763.50px;" width="23" height="23" viewBox="0 0 23 23"><path d="M9.69 3.40 L9.78 0.84 L13.22 0.84 L13.31 3.40 L15.95 4.49 L17.82 2.74 L20.26 5.18 L18.51 7.05 L19.60 9.69 L22.16 9.78 L22.16 13.22 L19.60 13.31 L18.51 15.95 L20.26 17.82 L17.82 20.26 L15.95 18.51 L13.31 19.60 L13.22 22.16 L9.78 22.16 L9.69 19.60 L7.05 18.51 L5.18 20.26 L2.74 17.82 L4.49 15.95 L3.40 13.31 L0.84 13.22 L0.84 9.78 L3.40 9.69 L4.49 7.05 L2.74 5.18 L5.18 2.74 L7.05 4.49 Z" stroke="#b3c8ee" stroke-width="1.4" fill="none" stroke-linejoin="round"/><circle cx="11.5" cy="11.5" r="3.6" stroke="#b3c8ee" stroke-width="1.4" fill="none"/></svg>
<div class="t" style="left:30.30px;top:835.10px;font-size:15.41px;color:#d5dce8;transform:scaleX(0.9387);-webkit-text-stroke:0.25px #d5dce8;">TÍCH HỢP & THÔNG BÁO</div>
<div class="t" style="left:68.00px;top:879.00px;font-size:17.30px;color:#c6d6f1;transform:scaleX(1.0568);-webkit-text-stroke:0.3px #c6d6f1;">Tài liệu nhà phát triển</div>
<svg style="position:absolute;left:32.00px;top:881.00px;" width="20" height="16" viewBox="0 0 20 16"><path d="M6 2.5 L1 8 L6 13.5 M14 2.5 L19 8 L14 13.5 M11.5 1 L8.5 15" stroke="#b3c8ee" stroke-width="1.3" fill="none"/></svg>
<svg style="position:absolute;left:260.50px;top:878.50px;" width="18" height="17" viewBox="0 0 18 17"><path d="M8 3.5 H1 V16 H13.5 V9" stroke="#4f86dd" stroke-width="1.3" fill="none"/><path d="M7 10 L16.5 1 M11 1 H17 V7" stroke="#4f86dd" stroke-width="1.3" fill="none"/></svg>
<div class="t" style="left:75.00px;top:932.20px;font-size:16.72px;color:#c6d6f1;transform:scaleX(1.0444);-webkit-text-stroke:0.3px #c6d6f1;">Tích hợp WebHooks</div>
<svg style="position:absolute;left:36.00px;top:929.50px;" width="17" height="23" viewBox="0 0 17 23"><path d="M11 1 L2 13 H8 L5 22 L15 9.5 H9 Z" stroke="#b3c8ee" stroke-width="1.3" fill="none" stroke-linejoin="round"/></svg>
<div class="t" style="left:72.90px;top:983.20px;font-size:17.01px;color:#c6d6f1;transform:scaleX(1.0375);-webkit-text-stroke:0.3px #c6d6f1;">Bank Hub</div>
<svg style="position:absolute;left:32.50px;top:981.50px;" width="20" height="21" viewBox="0 0 20 21"><path d="M10 0.5 L19.5 6 H0.5 Z" fill="#b3c8ee"/><path d="M1 6.5 H19 M0.5 18.5 H19.5 M0.5 20.3 H19.5 M3 8 V17 M6 8 V17 M9 8 V17 M12 8 V17 M15 8 V17 M17.5 8 V17" stroke="#b3c8ee" stroke-width="1.2"/></svg>
<div class="t" style="left:75.50px;top:1034.90px;font-size:17.30px;color:#c6d6f1;transform:scaleX(1.0433);-webkit-text-stroke:0.3px #c6d6f1;">Tích hợp Telegram</div>
<svg style="position:absolute;left:33.00px;top:1033.00px;" width="22" height="22" viewBox="0 0 22 22"><circle cx="11" cy="11" r="11" fill="#7ea3e6"/><path d="M4.5 10.8 L16.5 6 L14.5 16 L10.5 13 L8.5 15.5 L8.5 12.5 L14 8 L7.5 11.8 Z" fill="#1c5fc8"/></svg>
<div style="position:absolute;left:325px;top:204px;width:1595px;height:30px;background:linear-gradient(rgba(33,40,60,0.055),rgba(33,40,60,0))"></div>
<div style="position:absolute;left:325.00px;top:122.00px;width:1595.00px;height:82.00px;background:#fff"></div>
<div style="position:absolute;left:350.00px;top:151.20px;width:25.00px;height:3.20px;background:#3b4450;border-radius:2px"></div>
<div style="position:absolute;left:350.00px;top:161.10px;width:30.00px;height:3.20px;background:#3b4450;border-radius:2px"></div>
<div style="position:absolute;left:350.00px;top:171.40px;width:20.00px;height:3.20px;background:#3b4450;border-radius:2px"></div>
<div class="t" style="left:402.50px;top:149.00px;font-size:26.45px;color:#3b4450;transform:scaleX(1.0486);-webkit-text-stroke:0.5px #3b4450;">Giao dịch</div>
<div class="t" style="left:541.10px;top:154.90px;font-size:16.57px;color:#6d7075;transform:scaleX(1.0984);">Quick menu</div>
<svg style="position:absolute;left:646.50px;top:158.00px;" width="10" height="7" viewBox="0 0 10 7"><path d="M1 1 L5 5 L9 1" stroke="#6d7075" stroke-width="1.8" fill="none"/></svg>
<svg style="position:absolute;left:1245.00px;top:153.00px;" width="17" height="17" viewBox="0 0 17 17"><rect x="0.5" y="5" width="16" height="4" rx="0.8" fill="#3378e0"/><rect x="1.5" y="9.8" width="14" height="6.5" rx="0.8" fill="#3378e0"/><path d="M8.5 5 V16.5" stroke="#fff" stroke-width="1.4"/><path d="M8.5 5 C6 1 2.5 1.5 3.5 4.5 M8.5 5 C11 1 14.5 1.5 13.5 4.5" stroke="#3378e0" stroke-width="1.6" fill="none"/></svg>
<div class="t" style="left:1272.30px;top:154.90px;font-size:16.86px;color:#3378e0;transform:scaleX(1.0224);">Ưu đãi</div>
<svg style="position:absolute;left:1344.50px;top:153.50px;" width="17" height="16" viewBox="0 0 17 16"><path d="M8.5 0.5 L10.9 5.6 L16.5 6.2 L12.3 10 L13.5 15.5 L8.5 12.7 L3.5 15.5 L4.7 10 L0.5 6.2 L6.1 5.6 Z" fill="#eb9a3c"/></svg>
<div class="t" style="left:1366.30px;top:154.90px;font-size:16.72px;color:#eb9a3c;transform:scaleX(1.0931);">Nâng cấp</div>
<svg style="position:absolute;left:1464.50px;top:153.50px;" width="17" height="16" viewBox="0 0 17 16"><path d="M1 4 L13 1.2 V4" stroke="#2d3748" stroke-width="1.4" fill="none"/><rect x="0.8" y="4" width="15.5" height="11" rx="1.5" stroke="#2d3748" stroke-width="1.4" fill="none"/></svg>
<div class="t" style="left:1486.00px;top:155.00px;font-size:16.72px;color:#2d3748;transform:scaleX(0.9457);">Số dư:</div>
<div class="t" style="left:1539.00px;top:155.00px;font-size:16.72px;color:#2dbd5b;transform:scaleX(1.1078);">0đ</div>
<svg style="position:absolute;left:1587.50px;top:152.00px;" width="22" height="24" viewBox="0 0 22 24"><path d="M11 1.5 C5.5 1.5 4.5 6 4.5 10 V15 L1 19.5 H21 L17.5 15 V10 C17.5 6 16.5 1.5 11 1.5 Z" fill="#2f72e4"/><path d="M8 20.5 Q11 24.5 14 20.5 Z" fill="#2f72e4"/></svg>
<div style="position:absolute;left:1598.30px;top:142.00px;width:22.70px;height:22.70px;background:#dc3d3d;border-radius:50%"></div>
<div class="t" style="left:1605.50px;top:147.50px;font-size:13.37px;color:#ffffff;transform:scaleX(0.9702);">3</div>
<svg style="position:absolute;left:1642.60px;top:145.80px;" width="30" height="30" viewBox="0 0 30 30"><g transform="translate(15 15)"><rect x="-0.9" y="-15" width="1.8" height="4.2" rx="0.5" transform="rotate(0)" fill="#5f6b77"/><rect x="-0.9" y="-15" width="1.8" height="4.2" rx="0.5" transform="rotate(45)" fill="#5f6b77"/><rect x="-0.9" y="-15" width="1.8" height="4.2" rx="0.5" transform="rotate(90)" fill="#5f6b77"/><rect x="-0.9" y="-15" width="1.8" height="4.2" rx="0.5" transform="rotate(135)" fill="#5f6b77"/><rect x="-0.9" y="-15" width="1.8" height="4.2" rx="0.5" transform="rotate(180)" fill="#5f6b77"/><rect x="-0.9" y="-15" width="1.8" height="4.2" rx="0.5" transform="rotate(225)" fill="#5f6b77"/><rect x="-0.9" y="-15" width="1.8" height="4.2" rx="0.5" transform="rotate(270)" fill="#5f6b77"/><rect x="-0.9" y="-15" width="1.8" height="4.2" rx="0.5" transform="rotate(315)" fill="#5f6b77"/><circle r="8" fill="#5f6b77"/></g></svg>
<svg style="position:absolute;left:1699.00px;top:138.00px;" width="50" height="50" viewBox="0 0 50 50"><defs><clipPath id="avc"><circle cx="25" cy="25" r="25"/></clipPath><linearGradient id="avg" x1="0" y1="0" x2="0" y2="1"><stop offset="0" stop-color="#dad9cc"/><stop offset="0.2" stop-color="#eee0b4"/><stop offset="0.3" stop-color="#e9b27e"/><stop offset="0.38" stop-color="#c39a82"/><stop offset="0.44" stop-color="#b8b4ac"/><stop offset="0.52" stop-color="#c9c3b8"/><stop offset="0.57" stop-color="#8c9098"/><stop offset="0.64" stop-color="#d6cfc0"/><stop offset="0.71" stop-color="#858892"/><stop offset="0.78" stop-color="#c6c2b6"/><stop offset="1" stop-color="#bcb8ae"/></linearGradient></defs><g clip-path="url(#avc)"><rect width="50" height="50" fill="url(#avg)"/><ellipse cx="28" cy="17.3" rx="4.6" ry="4.2" fill="#26221f" opacity="0.95"/><path d="M26 21 H30 L31 23.5 Q33.5 25 33.5 30 L33 47 H22 L21.5 40 Q23 30 24.5 24.5 Z" fill="#1f2023"/><path d="M23 46 H32.5 V50 H23 Z" fill="#6a76a0"/></g></svg>
<div class="t" style="left:1758.60px;top:155.00px;font-size:16.86px;color:#2d3748;transform:scaleX(0.9951);">Trần Phúc Lực</div>
<svg style="position:absolute;left:1876.50px;top:157.50px;" width="10" height="7" viewBox="0 0 10 7"><path d="M1 1 L5 5 L9 1" stroke="#6c757d" stroke-width="1.7" fill="none"/></svg>
<div class="t" style="left:344.00px;top:230.00px;font-size:20.64px;color:#3b4450;font-weight:bold;transform:scaleX(1.0502);">Danh sách giao dịch</div>
<div style="position:absolute;left:1542.00px;top:223.00px;width:157.00px;height:33.00px;border:1px solid #3378e0;border-radius:4px;box-sizing:border-box"></div>
<div style="position:absolute;left:1709.00px;top:223.00px;width:97.00px;height:33.00px;border:1px solid #3378e0;border-radius:4px;box-sizing:border-box"></div>
<div style="position:absolute;left:1816.00px;top:223.00px;width:87.00px;height:33.00px;border:1px solid #3378e0;border-radius:4px;box-sizing:border-box"></div>
<svg style="position:absolute;left:1552.50px;top:231.50px;" width="16" height="16" viewBox="0 0 16 16"><circle cx="8" cy="8" r="7" stroke="#3378e0" stroke-width="1.1" stroke-dasharray="1.3 1" fill="none"/><path d="M8 4 V12 M4 8 H12" stroke="#3378e0" stroke-width="1.2"/></svg>
<div class="t" style="left:1573.50px;top:232.30px;font-size:16.72px;color:#3378e0;transform:scaleX(0.9878);">Thêm tài khoản</div>
<svg style="position:absolute;left:1719.00px;top:231.50px;" width="16" height="16" viewBox="0 0 16 16"><path d="M0.7 4 V0.7 H4 M12 0.7 H15.3 V4 M15.3 12 V15.3 H12 M4 15.3 H0.7 V12" stroke="#3378e0" stroke-width="1.2" fill="none"/><rect x="3.5" y="3.5" width="3.5" height="3.5" stroke="#3378e0" stroke-width="1.1" fill="none"/><rect x="9" y="3.5" width="3.5" height="3.5" stroke="#3378e0" stroke-width="1.1" fill="none"/><rect x="3.5" y="9" width="3.5" height="3.5" stroke="#3378e0" stroke-width="1.1" fill="none"/><path d="M9 9 H10.5 V12.5 M12.5 9 V11" stroke="#3378e0" stroke-width="1.1" fill="none"/></svg>
<div class="t" style="left:1744.00px;top:232.30px;font-size:16.72px;color:#3378e0;transform:scaleX(0.8581);">Tạo QR</div>
<svg style="position:absolute;left:1826.00px;top:232.00px;" width="16" height="14" viewBox="0 0 16 14"><path d="M2 6 Q3 2 8 2 Q13 2 14 6 L15.3 6.5 V9 L14 9.3 Q13 11 12 11.5 V13 H10 V12 H6 V13 H4 V11.5 Q1.5 10 1.5 7 Z" stroke="#3378e0" stroke-width="1.1" fill="none" stroke-linejoin="round"/></svg>
<div class="t" style="left:1850.60px;top:232.30px;font-size:16.72px;color:#3378e0;transform:scaleX(0.8905);">Số dư</div>
<div style="position:absolute;left:343.00px;top:266.00px;width:537.00px;height:108.00px;background:#fff;border:1px solid #dee4ec;border-radius:4px;box-sizing:border-box"></div>
<div style="position:absolute;left:900.00px;top:266.00px;width:445.00px;height:108.00px;background:#fff;border:1px solid #dee4ec;border-radius:4px;box-sizing:border-box"></div>
<div style="position:absolute;left:1365.00px;top:266.00px;width:538.00px;height:108.00px;background:#fff;border:1px solid #dee4ec;border-radius:4px;box-sizing:border-box"></div>
<div class="t" style="left:364.20px;top:291.80px;font-size:16.86px;color:#3b4450;transform:scaleX(1.0464);">Tiền vào</div>
<div class="t" style="left:365.20px;top:325.70px;font-size:21.51px;color:#25b35f;font-weight:bold;transform:scaleX(0.9542);">+124.893.167 đ</div>
<div class="t" style="left:921.60px;top:291.80px;font-size:16.86px;color:#3b4450;transform:scaleX(1.0272);">Tiền ra</div>
<div class="t" style="left:922.40px;top:325.70px;font-size:21.51px;color:#dc3545;font-weight:bold;transform:scaleX(1.1193);">-0 đ</div>
<div class="t" style="left:1386.40px;top:291.80px;font-size:16.86px;color:#3b4450;transform:scaleX(1.0807);">Chênh lệch</div>
<div class="t" style="left:1387.50px;top:325.70px;font-size:21.51px;color:#2f6fe0;font-weight:bold;transform:scaleX(0.9588);">+124.893.167 đ</div>
<div style="position:absolute;left:343.00px;top:394.00px;width:199.00px;height:38.00px;background:#fff;border:1px solid #ced4da;border-radius:4px;box-sizing:border-box"></div>
<div class="t" style="left:357.80px;top:404.00px;font-size:17.15px;color:#6c757d;transform:scaleX(0.9482);">Tìm kiếm…</div>
<div style="position:absolute;left:552.00px;top:394.00px;width:225.00px;height:38.00px;background:#fff;border:1px solid #ced4da;border-radius:4px;box-sizing:border-box"></div>
<div class="t" style="left:566.90px;top:404.00px;font-size:17.15px;color:#343a40;transform:scaleX(1.0284);">Tất cả tài khoản</div>
<svg style="position:absolute;left:744.50px;top:408.00px;" width="14" height="9" viewBox="0 0 14 9"><path d="M1 1 L7 7 L13 1" stroke="#343a40" stroke-width="1.8" fill="none"/></svg>
<div style="position:absolute;left:787.00px;top:394.00px;width:262.00px;height:38.00px;background:#fff;border:1px dotted #b9c0c8;border-radius:4px;box-sizing:border-box"></div>
<svg style="position:absolute;left:803.00px;top:405.00px;" width="14" height="14" viewBox="0 0 14 14"><path d="M0.5 0.5 H13.5 L8.5 7 V13.5 L5.5 11.5 V7 Z" fill="#343a40"/></svg>
<div class="t" style="left:823.60px;top:404.00px;font-size:17.15px;color:#343a40;transform:scaleX(1.0494);">Loại giao dịch</div>
<div style="position:absolute;left:945.30px;top:402.20px;width:88.60px;height:21.50px;background:#e6effc;border-radius:11px"></div>
<div class="t" style="left:955.60px;top:404.80px;font-size:15.55px;color:#3378e0;transform:scaleX(0.9550);">Tiền vào</div>
<svg style="position:absolute;left:1017.50px;top:409.50px;" width="6.5" height="6.5" viewBox="0 0 6.5 6.5"><path d="M0.8 0.8 L5.7 5.7 M5.7 0.8 L0.8 5.7" stroke="#3378e0" stroke-width="1.2"/></svg>
<div style="position:absolute;left:1059.00px;top:394.00px;width:263.00px;height:38.00px;background:#fff;border:1px solid #ced4da;border-radius:4px;box-sizing:border-box"></div>
<div style="position:absolute;left:1059.00px;top:394.00px;width:38.00px;height:38.00px;background:#fff;border:1px solid #ced4da;border-radius:4px 0 0 4px;box-sizing:border-box"></div>
<svg style="position:absolute;left:1070.00px;top:403.40px;" width="16" height="17" viewBox="0 0 16 17"><rect x="0.7" y="0.7" width="14.6" height="15" rx="2" stroke="#343a40" stroke-width="1.2" fill="none"/><path d="M0.7 2.6 H15.3" stroke="#343a40" stroke-width="2.6"/><circle cx="6.4" cy="6.5" r="0.85" fill="#343a40"/><circle cx="9.5" cy="6.5" r="0.85" fill="#343a40"/><circle cx="12.6" cy="6.5" r="0.85" fill="#343a40"/><circle cx="3.3" cy="9.7" r="0.85" fill="#343a40"/><circle cx="6.4" cy="9.7" r="0.85" fill="#343a40"/><circle cx="9.5" cy="9.7" r="0.85" fill="#343a40"/><circle cx="12.6" cy="9.7" r="0.85" fill="#343a40"/><circle cx="3.3" cy="12.9" r="0.85" fill="#343a40"/><circle cx="6.4" cy="12.9" r="0.85" fill="#343a40"/><circle cx="9.5" cy="12.9" r="0.85" fill="#343a40"/></svg>
<div class="t" style="left:1107.20px;top:404.00px;font-size:17.15px;color:#6c757d;transform:scaleX(0.9356);">Thời gian</div>
<div style="position:absolute;left:1331.00px;top:394.00px;width:425.00px;height:38.00px;background:#fff;border:1px solid #ced4da;border-radius:4px;box-sizing:border-box"></div>
<div style="position:absolute;left:1331.00px;top:394.00px;width:75.00px;height:38.00px;background:#fff;border:1px solid #ced4da;border-radius:4px 0 0 4px;box-sizing:border-box"></div>
<div style="position:absolute;left:1553.00px;top:394.00px;width:34.00px;height:38.00px;background:#fff;border:1px solid #ced4da;box-sizing:border-box"></div>
<div style="position:absolute;left:1733.00px;top:394.00px;width:23.00px;height:38.00px;background:#fff;border:1px solid #ced4da;border-radius:0 4px 4px 0;box-sizing:border-box"></div>
<div class="t" style="left:1342.40px;top:404.00px;font-size:17.15px;color:#343a40;transform:scaleX(0.9760);">Số tiền</div>
<div class="t" style="left:1420.00px;top:404.00px;font-size:17.15px;color:#6c757d;transform:scaleX(0.8336);">Từ</div>
<div style="position:absolute;left:1565.00px;top:412.00px;width:9.00px;height:1.00px;background:#343a40"></div>
<div class="t" style="left:1600.00px;top:404.00px;font-size:17.15px;color:#6c757d;transform:scaleX(0.9850);">Đến</div>
<div class="t" style="left:1739.40px;top:404.00px;font-size:17.15px;color:#343a40;transform:scaleX(1.0505);-webkit-text-stroke:0.4px #343a40;">đ</div>
<div style="position:absolute;left:1766.00px;top:394.00px;width:113.00px;height:38.00px;border:1px solid #e25563;border-radius:4px;box-sizing:border-box"></div>
<svg style="position:absolute;left:1780.50px;top:404.00px;" width="18" height="18" viewBox="0 0 18 18"><circle cx="9" cy="9" r="8" stroke="#dc3545" stroke-width="1.3" fill="none"/><path d="M5.8 5.8 L12.2 12.2 M12.2 5.8 L5.8 12.2" stroke="#dc3545" stroke-width="1.3"/></svg>
<div class="t" style="left:1802.80px;top:403.50px;font-size:18.60px;color:#dc3545;transform:scaleX(0.9525);">Xóa lọc</div>
<div style="position:absolute;left:1760.00px;top:442.00px;width:37.00px;height:33.00px;border:1px solid #495057;border-radius:4px;box-sizing:border-box"></div>
<svg style="position:absolute;left:1771.00px;top:450.00px;" width="16" height="15" viewBox="0 0 16 15"><rect x="0.8" y="0.8" width="14.4" height="13.4" rx="2" stroke="#343a40" stroke-width="1.3" fill="none"/><path d="M5.6 1 V14 M10.4 1 V14" stroke="#343a40" stroke-width="1.3"/></svg>
<div style="position:absolute;left:1801.00px;top:442.00px;width:102.00px;height:33.00px;border:1px solid #495057;border-radius:4px;box-sizing:border-box"></div>
<svg style="position:absolute;left:1812.00px;top:449.50px;" width="16" height="15" viewBox="0 0 16 15"><path d="M8 1 V9.5 M4.5 6 L8 9.5 L11.5 6" stroke="#343a40" stroke-width="1.3" fill="none"/><path d="M1 9.5 V13.8 H15 V9.5" stroke="#343a40" stroke-width="1.3" fill="none"/></svg>
<div class="t" style="left:1833.80px;top:449.60px;font-size:17.88px;color:#343a40;transform:scaleX(0.8872);">Xuất file</div>
<div style="position:absolute;left:343px;top:492px;width:1560px;height:600px;overflow:hidden;">
<div style="position:absolute;left:0.00px;top:0.00px;width:1620.00px;height:600.00px;background:#fff"></div>
<div style="position:absolute;left:0.00px;top:0.00px;width:1620.00px;height:1.00px;background:#dee4ec"></div>
<div style="position:absolute;left:0.00px;top:48.00px;width:1620.00px;height:1.00px;background:#dee4ec"></div>
<div style="position:absolute;left:0.00px;top:100.00px;width:1620.00px;height:1.00px;background:#dee4ec"></div>
<div style="position:absolute;left:0.00px;top:152.00px;width:1620.00px;height:1.00px;background:#dee4ec"></div>
<div style="position:absolute;left:0.00px;top:205.00px;width:1620.00px;height:1.00px;background:#dee4ec"></div>
<div style="position:absolute;left:0.00px;top:257.00px;width:1620.00px;height:1.00px;background:#dee4ec"></div>
<div style="position:absolute;left:0.00px;top:306.00px;width:1620.00px;height:1.00px;background:#dee4ec"></div>
<div style="position:absolute;left:0.00px;top:355.00px;width:1620.00px;height:1.00px;background:#dee4ec"></div>
<div style="position:absolute;left:0.00px;top:405.00px;width:1620.00px;height:1.00px;background:#dee4ec"></div>
<div style="position:absolute;left:0.00px;top:455.00px;width:1620.00px;height:1.00px;background:#dee4ec"></div>
<div style="position:absolute;left:0.00px;top:504.00px;width:1620.00px;height:1.00px;background:#dee4ec"></div>
<div style="position:absolute;left:0.00px;top:553.00px;width:1620.00px;height:1.00px;background:#dee4ec"></div>
<div style="position:absolute;left:0.00px;top:602.00px;width:1620.00px;height:1.00px;background:#dee4ec"></div>
<div style="position:absolute;left:0.00px;top:0.00px;width:1.00px;height:600.00px;background:#dee4ec"></div>
<div style="position:absolute;left:112.00px;top:0.00px;width:1.00px;height:600.00px;background:#dee4ec"></div>
<div style="position:absolute;left:309.00px;top:0.00px;width:1.00px;height:600.00px;background:#dee4ec"></div>
<div style="position:absolute;left:462.00px;top:0.00px;width:1.00px;height:600.00px;background:#dee4ec"></div>
<div style="position:absolute;left:593.00px;top:0.00px;width:1.00px;height:600.00px;background:#dee4ec"></div>
<div style="position:absolute;left:737.00px;top:0.00px;width:1.00px;height:600.00px;background:#dee4ec"></div>
<div style="position:absolute;left:856.00px;top:0.00px;width:1.00px;height:600.00px;background:#dee4ec"></div>
<div style="position:absolute;left:1137.00px;top:0.00px;width:1.00px;height:600.00px;background:#dee4ec"></div>
<div style="position:absolute;left:1284.00px;top:0.00px;width:1.00px;height:600.00px;background:#dee4ec"></div>
<div style="position:absolute;left:1474.00px;top:0.00px;width:1.00px;height:600.00px;background:#dee4ec"></div>
</div>
<div class="t" style="left:358.50px;top:507.90px;font-size:14.39px;color:#3d4651;transform:scaleX(0.9208);-webkit-text-stroke:0.1px #3d4651;">ID</div>
<div class="t" style="left:471.00px;top:507.90px;font-size:14.39px;color:#3d4651;transform:scaleX(0.9474);-webkit-text-stroke:0.1px #3d4651;">THỜI GIAN</div>
<div class="t" style="left:668.50px;top:507.90px;font-size:14.39px;color:#3d4651;transform:scaleX(0.9509);-webkit-text-stroke:0.1px #3d4651;">TÀI KHOẢN</div>
<div class="t" style="left:821.40px;top:507.90px;font-size:14.39px;color:#3d4651;transform:scaleX(0.9663);-webkit-text-stroke:0.1px #3d4651;">TÀI KHOẢN ẢO</div>
<div class="t" style="left:952.50px;top:507.90px;font-size:14.39px;color:#3d4651;transform:scaleX(0.9266);-webkit-text-stroke:0.1px #3d4651;">SỐ TIỀN</div>
<div class="t" style="left:1096.40px;top:507.90px;font-size:14.39px;color:#3d4651;transform:scaleX(0.8814);-webkit-text-stroke:0.1px #3d4651;">LŨY KẾ</div>
<div class="t" style="left:1214.70px;top:507.90px;font-size:14.39px;color:#3d4651;transform:scaleX(0.9674);-webkit-text-stroke:0.1px #3d4651;">NỘI DUNG</div>
<div class="t" style="left:1496.00px;top:507.90px;font-size:14.39px;color:#3d4651;transform:scaleX(0.9801);-webkit-text-stroke:0.1px #3d4651;">MÃ THANH TOÁN</div>
<div class="t" style="left:1643.20px;top:507.90px;font-size:14.39px;color:#3d4651;transform:scaleX(0.9768);-webkit-text-stroke:0.1px #3d4651;">MÃ THAM CHIẾU</div>
<div class="t" style="left:1833.30px;top:507.90px;font-size:14.39px;color:#3d4651;transform:scaleX(0.9364);-webkit-text-stroke:0.1px #3d4651;">TỰ ĐỘNG</div>
<svg style="position:absolute;left:436.25px;top:509.50px;" width="5" height="15" viewBox="0 0 5 15"><path d="M0 3.5 L2.5 0 L5 3.5 Z" fill="#e1e4e8"/><path d="M0 10.5 H5 L2.5 14 Z" fill="#e1e4e8"/></svg>
<svg style="position:absolute;left:633.60px;top:509.50px;" width="5" height="15" viewBox="0 0 5 15"><path d="M0 3.5 L2.5 0 L5 3.5 Z" fill="#e1e4e8"/><path d="M0 10.5 H5 L2.5 14 Z" fill="#6c7178"/></svg>
<svg style="position:absolute;left:917.50px;top:509.50px;" width="5" height="15" viewBox="0 0 5 15"><path d="M0 3.5 L2.5 0 L5 3.5 Z" fill="#e1e4e8"/><path d="M0 10.5 H5 L2.5 14 Z" fill="#e1e4e8"/></svg>
<svg style="position:absolute;left:1061.80px;top:509.50px;" width="5" height="15" viewBox="0 0 5 15"><path d="M0 3.5 L2.5 0 L5 3.5 Z" fill="#e1e4e8"/><path d="M0 10.5 H5 L2.5 14 Z" fill="#e1e4e8"/></svg>
<svg style="position:absolute;left:1180.40px;top:509.50px;" width="5" height="15" viewBox="0 0 5 15"><path d="M0 3.5 L2.5 0 L5 3.5 Z" fill="#e1e4e8"/><path d="M0 10.5 H5 L2.5 14 Z" fill="#e1e4e8"/></svg>
<svg style="position:absolute;left:1461.30px;top:509.50px;" width="5" height="15" viewBox="0 0 5 15"><path d="M0 3.5 L2.5 0 L5 3.5 Z" fill="#e1e4e8"/><path d="M0 10.5 H5 L2.5 14 Z" fill="#e1e4e8"/></svg>
<svg style="position:absolute;left:1608.80px;top:509.50px;" width="5" height="15" viewBox="0 0 5 15"><path d="M0 3.5 L2.5 0 L5 3.5 Z" fill="#e1e4e8"/><path d="M0 10.5 H5 L2.5 14 Z" fill="#e1e4e8"/></svg>
<svg style="position:absolute;left:1798.50px;top:509.50px;" width="5" height="15" viewBox="0 0 5 15"><path d="M0 3.5 L2.5 0 L5 3.5 Z" fill="#e1e4e8"/><path d="M0 10.5 H5 L2.5 14 Z" fill="#e1e4e8"/></svg>
<div class="t" style="left:358.75px;top:557.35px;font-size:17.01px;color:#525a63;transform:scaleX(1.0525);">49334888</div>
<div class="t" style="left:471.00px;top:557.35px;font-size:17.01px;color:#525a63;transform:scaleX(1.0331);">10/04/2026 07:04:00</div>
<svg style="position:absolute;left:669.00px;top:557.00px;" width="19" height="20" viewBox="0 0 19 20"><path d="M10.5 1.0 L8.6 4.2 M11.4 4.5 L11.2 8.7 M13.6 8.6 L17.0 9.9 M10.2 12.3 L14.3 11.3 M11.3 14.5 L11.6 18.5 M6.8 12.7 L8.8 16.2 M1.3 15.2 L4.7 14.0 M4.9 9.3 L2.9 12.6 M1.4 4.5 L3.2 7.9 M4.5 5.5 L8.0 6.7" stroke="#e8002d" stroke-width="1.7" stroke-linecap="round" fill="none"/></svg>
<div class="t" style="left:693.50px;top:557.35px;font-size:17.01px;color:#525a63;transform:scaleX(1.0201);">0368786277</div>
<div style="position:absolute;left:822.00px;top:564.00px;width:13.00px;height:2.00px;background:#737b83"></div>
<div class="t" style="left:953.10px;top:557.35px;font-size:17.01px;color:#25b35f;font-weight:bold;transform:scaleX(1.0183);">+140.000 đ</div>
<div class="t" style="left:1096.40px;top:557.35px;font-size:17.01px;color:#525a63;transform:scaleX(0.9282);">17.783.593</div>
<div class="t" style="left:1214.70px;top:557.35px;font-size:17.01px;color:#525a63;transform:scaleX(0.9392);">DHTVD9F6CA FT26100433905…</div>
<div style="position:absolute;left:1497.00px;top:564.00px;width:13.00px;height:2.00px;background:#737b83"></div>
<div class="t" style="left:1643.20px;top:557.35px;font-size:17.01px;color:#525a63;transform:scaleX(0.9871);">FT26100025004759</div>
<div style="position:absolute;left:1833px;top:551.75px;width:70px;height:29px;overflow:hidden"><div style="position:absolute;left:0;top:0;width:110px;height:29px;box-sizing:border-box;border:1px solid #c8ebd3;background:#eef9f2;border-radius:15px"></div><svg style="position:absolute;left:11px;top:7px" width="11" height="15" viewBox="0 0 11 15"><path d="M7.5 0.8 L1.5 8.5 H5.5 L3.5 14.2 L9.5 6.5 H5.5 Z" stroke="#25b35f" stroke-width="1.1" fill="none" stroke-linejoin="round"/></svg><div class="t" style="left:27.5px;top:6.75px;font-size:14.5px;font-weight:bold;color:#25b35f;transform:scaleX(0.97)">Webhook</div></div>
<div class="t" style="left:358.75px;top:609.75px;font-size:17.01px;color:#525a63;transform:scaleX(0.9706);">49328714</div>
<div class="t" style="left:471.00px;top:609.75px;font-size:17.01px;color:#525a63;transform:scaleX(1.0383);">10/04/2026 04:34:00</div>
<svg style="position:absolute;left:669.00px;top:609.40px;" width="19" height="20" viewBox="0 0 19 20"><path d="M10.5 1.0 L8.6 4.2 M11.4 4.5 L11.2 8.7 M13.6 8.6 L17.0 9.9 M10.2 12.3 L14.3 11.3 M11.3 14.5 L11.6 18.5 M6.8 12.7 L8.8 16.2 M1.3 15.2 L4.7 14.0 M4.9 9.3 L2.9 12.6 M1.4 4.5 L3.2 7.9 M4.5 5.5 L8.0 6.7" stroke="#e8002d" stroke-width="1.7" stroke-linecap="round" fill="none"/></svg>
<div class="t" style="left:693.50px;top:609.75px;font-size:17.01px;color:#525a63;transform:scaleX(1.0201);">0368786277</div>
<div style="position:absolute;left:822.00px;top:617.00px;width:13.00px;height:2.00px;background:#737b83"></div>
<div class="t" style="left:953.10px;top:609.75px;font-size:17.01px;color:#25b35f;font-weight:bold;transform:scaleX(1.0495);">+200.000 đ</div>
<div class="t" style="left:1096.40px;top:609.75px;font-size:17.01px;color:#525a63;transform:scaleX(0.9481);">17.643.593</div>
<div class="t" style="left:1214.70px;top:609.75px;font-size:17.01px;color:#525a63;transform:scaleX(0.9850);">AI4DEV432499</div>
<div style="position:absolute;left:1497.00px;top:617.00px;width:13.00px;height:2.00px;background:#737b83"></div>
<div class="t" style="left:1643.20px;top:609.75px;font-size:17.01px;color:#525a63;transform:scaleX(0.9897);">FT26100967405043</div>
<div style="position:absolute;left:1833px;top:604.15px;width:70px;height:29px;overflow:hidden"><div style="position:absolute;left:0;top:0;width:110px;height:29px;box-sizing:border-box;border:1px solid #c8ebd3;background:#eef9f2;border-radius:15px"></div><svg style="position:absolute;left:11px;top:7px" width="11" height="15" viewBox="0 0 11 15"><path d="M7.5 0.8 L1.5 8.5 H5.5 L3.5 14.2 L9.5 6.5 H5.5 Z" stroke="#25b35f" stroke-width="1.1" fill="none" stroke-linejoin="round"/></svg><div class="t" style="left:27.5px;top:6.75px;font-size:14.5px;font-weight:bold;color:#25b35f;transform:scaleX(0.97)">Webhook</div></div>
<div class="t" style="left:358.75px;top:662.05px;font-size:17.01px;color:#525a63;transform:scaleX(0.9812);">49328613</div>
<div class="t" style="left:471.00px;top:662.05px;font-size:17.01px;color:#525a63;transform:scaleX(1.0383);">10/04/2026 04:26:00</div>
<svg style="position:absolute;left:669.00px;top:661.70px;" width="19" height="20" viewBox="0 0 19 20"><path d="M10.5 1.0 L8.6 4.2 M11.4 4.5 L11.2 8.7 M13.6 8.6 L17.0 9.9 M10.2 12.3 L14.3 11.3 M11.3 14.5 L11.6 18.5 M6.8 12.7 L8.8 16.2 M1.3 15.2 L4.7 14.0 M4.9 9.3 L2.9 12.6 M1.4 4.5 L3.2 7.9 M4.5 5.5 L8.0 6.7" stroke="#e8002d" stroke-width="1.7" stroke-linecap="round" fill="none"/></svg>
<div class="t" style="left:693.50px;top:662.05px;font-size:17.01px;color:#525a63;transform:scaleX(1.0201);">0368786277</div>
<div style="position:absolute;left:822.00px;top:669.00px;width:13.00px;height:2.00px;background:#737b83"></div>
<div class="t" style="left:953.10px;top:662.05px;font-size:17.01px;color:#25b35f;font-weight:bold;transform:scaleX(1.0495);">+200.000 đ</div>
<div class="t" style="left:1096.40px;top:662.05px;font-size:17.01px;color:#525a63;transform:scaleX(0.9481);">17.443.593</div>
<div class="t" style="left:1214.70px;top:662.05px;font-size:17.01px;color:#525a63;transform:scaleX(0.9475);">AI4DEV951607</div>
<div style="position:absolute;left:1497.00px;top:669.00px;width:13.00px;height:2.00px;background:#737b83"></div>
<div class="t" style="left:1643.20px;top:662.05px;font-size:17.01px;color:#525a63;transform:scaleX(0.9838);">FT26100375336980</div>
<div style="position:absolute;left:1833px;top:656.45px;width:70px;height:29px;overflow:hidden"><div style="position:absolute;left:0;top:0;width:110px;height:29px;box-sizing:border-box;border:1px solid #c8ebd3;background:#eef9f2;border-radius:15px"></div><svg style="position:absolute;left:11px;top:7px" width="11" height="15" viewBox="0 0 11 15"><path d="M7.5 0.8 L1.5 8.5 H5.5 L3.5 14.2 L9.5 6.5 H5.5 Z" stroke="#25b35f" stroke-width="1.1" fill="none" stroke-linejoin="round"/></svg><div class="t" style="left:27.5px;top:6.75px;font-size:14.5px;font-weight:bold;color:#25b35f;transform:scaleX(0.97)">Webhook</div></div>
<div class="t" style="left:358.75px;top:714.25px;font-size:17.01px;color:#525a63;transform:scaleX(1.0327);">49328243</div>
<div class="t" style="left:471.00px;top:714.25px;font-size:17.01px;color:#525a63;transform:scaleX(1.0383);">10/04/2026 04:03:00</div>
<svg style="position:absolute;left:669.00px;top:713.90px;" width="19" height="20" viewBox="0 0 19 20"><path d="M10.5 1.0 L8.6 4.2 M11.4 4.5 L11.2 8.7 M13.6 8.6 L17.0 9.9 M10.2 12.3 L14.3 11.3 M11.3 14.5 L11.6 18.5 M6.8 12.7 L8.8 16.2 M1.3 15.2 L4.7 14.0 M4.9 9.3 L2.9 12.6 M1.4 4.5 L3.2 7.9 M4.5 5.5 L8.0 6.7" stroke="#e8002d" stroke-width="1.7" stroke-linecap="round" fill="none"/></svg>
<div class="t" style="left:693.50px;top:714.25px;font-size:17.01px;color:#525a63;transform:scaleX(1.0201);">0368786277</div>
<div style="position:absolute;left:822.00px;top:721.00px;width:13.00px;height:2.00px;background:#737b83"></div>
<div class="t" style="left:953.10px;top:714.25px;font-size:17.01px;color:#25b35f;font-weight:bold;transform:scaleX(1.0495);">+200.000 đ</div>
<div class="t" style="left:1096.40px;top:714.25px;font-size:17.01px;color:#525a63;transform:scaleX(0.9282);">17.243.593</div>
<div class="t" style="left:1214.70px;top:714.25px;font-size:17.01px;color:#525a63;transform:scaleX(0.9893);">AI4DEV598289</div>
<div style="position:absolute;left:1497.00px;top:721.00px;width:13.00px;height:2.00px;background:#737b83"></div>
<div class="t" style="left:1643.20px;top:714.25px;font-size:17.01px;color:#525a63;transform:scaleX(0.9584);">FT26100034168007</div>
<div style="position:absolute;left:1833px;top:708.65px;width:70px;height:29px;overflow:hidden"><div style="position:absolute;left:0;top:0;width:110px;height:29px;box-sizing:border-box;border:1px solid #c8ebd3;background:#eef9f2;border-radius:15px"></div><svg style="position:absolute;left:11px;top:7px" width="11" height="15" viewBox="0 0 11 15"><path d="M7.5 0.8 L1.5 8.5 H5.5 L3.5 14.2 L9.5 6.5 H5.5 Z" stroke="#25b35f" stroke-width="1.1" fill="none" stroke-linejoin="round"/></svg><div class="t" style="left:27.5px;top:6.75px;font-size:14.5px;font-weight:bold;color:#25b35f;transform:scaleX(0.97)">Webhook</div></div>
<div class="t" style="left:358.75px;top:764.95px;font-size:17.01px;color:#525a63;transform:scaleX(0.9812);">49301302</div>
<div class="t" style="left:471.00px;top:764.95px;font-size:17.01px;color:#525a63;transform:scaleX(1.0453);">09/04/2026 22:27:00</div>
<svg style="position:absolute;left:669.00px;top:764.60px;" width="19" height="20" viewBox="0 0 19 20"><path d="M10.5 1.0 L8.6 4.2 M11.4 4.5 L11.2 8.7 M13.6 8.6 L17.0 9.9 M10.2 12.3 L14.3 11.3 M11.3 14.5 L11.6 18.5 M6.8 12.7 L8.8 16.2 M1.3 15.2 L4.7 14.0 M4.9 9.3 L2.9 12.6 M1.4 4.5 L3.2 7.9 M4.5 5.5 L8.0 6.7" stroke="#e8002d" stroke-width="1.7" stroke-linecap="round" fill="none"/></svg>
<div class="t" style="left:693.50px;top:764.95px;font-size:17.01px;color:#525a63;transform:scaleX(1.0201);">0368786277</div>
<div style="position:absolute;left:822.00px;top:772.00px;width:13.00px;height:2.00px;background:#737b83"></div>
<div class="t" style="left:953.10px;top:764.95px;font-size:17.01px;color:#25b35f;font-weight:bold;transform:scaleX(1.0622);">+450.000 đ</div>
<div class="t" style="left:1096.40px;top:764.95px;font-size:17.01px;color:#525a63;transform:scaleX(0.9528);">18.070.593</div>
<div class="t" style="left:1214.70px;top:764.95px;font-size:17.01px;color:#525a63;transform:scaleX(0.9869);">DHD84MC9TB Ma giao dich Tr…</div>
<div style="position:absolute;left:1497.00px;top:772.00px;width:13.00px;height:2.00px;background:#737b83"></div>
<div class="t" style="left:1643.20px;top:764.95px;font-size:17.01px;color:#525a63;transform:scaleX(0.9211);">FT26100155887120</div>
<div style="position:absolute;left:1833.00px;top:772.00px;width:13.00px;height:2.00px;background:#737b83"></div>
<div class="t" style="left:358.75px;top:814.15px;font-size:17.01px;color:#525a63;transform:scaleX(0.9653);">49215270</div>
<div class="t" style="left:471.00px;top:814.15px;font-size:17.01px;color:#525a63;transform:scaleX(1.0408);">09/04/2026 16:45:00</div>
<svg style="position:absolute;left:669.00px;top:813.80px;" width="19" height="20" viewBox="0 0 19 20"><path d="M10.5 1.0 L8.6 4.2 M11.4 4.5 L11.2 8.7 M13.6 8.6 L17.0 9.9 M10.2 12.3 L14.3 11.3 M11.3 14.5 L11.6 18.5 M6.8 12.7 L8.8 16.2 M1.3 15.2 L4.7 14.0 M4.9 9.3 L2.9 12.6 M1.4 4.5 L3.2 7.9 M4.5 5.5 L8.0 6.7" stroke="#e8002d" stroke-width="1.7" stroke-linecap="round" fill="none"/></svg>
<div class="t" style="left:693.50px;top:814.15px;font-size:17.01px;color:#525a63;transform:scaleX(1.0201);">0368786277</div>
<div style="position:absolute;left:822.00px;top:821.00px;width:13.00px;height:2.00px;background:#737b83"></div>
<div class="t" style="left:953.10px;top:814.15px;font-size:17.01px;color:#25b35f;font-weight:bold;transform:scaleX(1.0044);">+150.000 đ</div>
<div class="t" style="left:1096.40px;top:814.15px;font-size:17.01px;color:#525a63;">22.246.593</div>
<div class="t" style="left:1214.70px;top:814.15px;font-size:17.01px;color:#525a63;transform:scaleX(0.8764);">DHZ81HBISQ</div>
<div style="position:absolute;left:1497.00px;top:821.00px;width:13.00px;height:2.00px;background:#737b83"></div>
<div class="t" style="left:1643.20px;top:814.15px;font-size:17.01px;color:#525a63;transform:scaleX(0.9694);">FT26099513169608</div>
<div style="position:absolute;left:1833.00px;top:821.00px;width:13.00px;height:2.00px;background:#737b83"></div>
<div class="t" style="left:358.75px;top:863.70px;font-size:17.01px;color:#525a63;transform:scaleX(0.9957);">49214560</div>
<div class="t" style="left:471.00px;top:863.70px;font-size:17.01px;color:#525a63;transform:scaleX(1.0357);">09/04/2026 16:42:00</div>
<svg style="position:absolute;left:669.00px;top:863.35px;" width="19" height="20" viewBox="0 0 19 20"><path d="M10.5 1.0 L8.6 4.2 M11.4 4.5 L11.2 8.7 M13.6 8.6 L17.0 9.9 M10.2 12.3 L14.3 11.3 M11.3 14.5 L11.6 18.5 M6.8 12.7 L8.8 16.2 M1.3 15.2 L4.7 14.0 M4.9 9.3 L2.9 12.6 M1.4 4.5 L3.2 7.9 M4.5 5.5 L8.0 6.7" stroke="#e8002d" stroke-width="1.7" stroke-linecap="round" fill="none"/></svg>
<div class="t" style="left:693.50px;top:863.70px;font-size:17.01px;color:#525a63;transform:scaleX(1.0201);">0368786277</div>
<div style="position:absolute;left:822.00px;top:871.00px;width:13.00px;height:2.00px;background:#737b83"></div>
<div class="t" style="left:953.10px;top:863.70px;font-size:17.01px;color:#25b35f;font-weight:bold;transform:scaleX(1.0415);">+3.200.000 đ</div>
<div class="t" style="left:1096.40px;top:863.70px;font-size:17.01px;color:#525a63;transform:scaleX(1.0151);">23.896.593</div>
<div class="t" style="left:1214.70px;top:863.70px;font-size:17.01px;color:#525a63;transform:scaleX(0.9964);">cursor FT26099008270405 M…</div>
<div style="position:absolute;left:1497.00px;top:871.00px;width:13.00px;height:2.00px;background:#737b83"></div>
<div class="t" style="left:1643.20px;top:863.70px;font-size:17.01px;color:#525a63;transform:scaleX(1.0125);">FT26099970264023</div>
<div style="position:absolute;left:1833.00px;top:871.00px;width:13.00px;height:2.00px;background:#737b83"></div>
<div class="t" style="left:358.75px;top:913.40px;font-size:17.01px;color:#525a63;">49185863</div>
<div class="t" style="left:471.00px;top:913.40px;font-size:17.01px;color:#525a63;transform:scaleX(1.0030);">09/04/2026 14:12:00</div>
<svg style="position:absolute;left:669.00px;top:913.05px;" width="19" height="20" viewBox="0 0 19 20"><path d="M10.5 1.0 L8.6 4.2 M11.4 4.5 L11.2 8.7 M13.6 8.6 L17.0 9.9 M10.2 12.3 L14.3 11.3 M11.3 14.5 L11.6 18.5 M6.8 12.7 L8.8 16.2 M1.3 15.2 L4.7 14.0 M4.9 9.3 L2.9 12.6 M1.4 4.5 L3.2 7.9 M4.5 5.5 L8.0 6.7" stroke="#e8002d" stroke-width="1.7" stroke-linecap="round" fill="none"/></svg>
<div class="t" style="left:693.50px;top:913.40px;font-size:17.01px;color:#525a63;transform:scaleX(1.0201);">0368786277</div>
<div style="position:absolute;left:822.00px;top:920.00px;width:13.00px;height:2.00px;background:#737b83"></div>
<div class="t" style="left:953.10px;top:913.40px;font-size:17.01px;color:#25b35f;font-weight:bold;transform:scaleX(1.0195);">+10.500.000 đ</div>
<div class="t" style="left:1096.40px;top:913.40px;font-size:17.01px;color:#525a63;transform:scaleX(1.0198);">20.696.593</div>
<div class="t" style="left:1214.70px;top:913.40px;font-size:17.01px;color:#525a63;transform:scaleX(1.0174);">dp pc26 ai pro- Ma GD ACSP/…</div>
<div style="position:absolute;left:1497.00px;top:920.00px;width:13.00px;height:2.00px;background:#737b83"></div>
<div class="t" style="left:1643.20px;top:913.40px;font-size:17.01px;color:#525a63;transform:scaleX(0.9838);">FT26099424574391</div>
<div style="position:absolute;left:1833.00px;top:920.00px;width:13.00px;height:2.00px;background:#737b83"></div>
<div class="t" style="left:358.75px;top:962.85px;font-size:17.01px;color:#525a63;transform:scaleX(0.9911);">49146382</div>
<div class="t" style="left:471.00px;top:962.85px;font-size:17.01px;color:#525a63;transform:scaleX(1.0357);">09/04/2026 10:42:00</div>
<svg style="position:absolute;left:669.00px;top:962.50px;" width="19" height="20" viewBox="0 0 19 20"><path d="M10.5 1.0 L8.6 4.2 M11.4 4.5 L11.2 8.7 M13.6 8.6 L17.0 9.9 M10.2 12.3 L14.3 11.3 M11.3 14.5 L11.6 18.5 M6.8 12.7 L8.8 16.2 M1.3 15.2 L4.7 14.0 M4.9 9.3 L2.9 12.6 M1.4 4.5 L3.2 7.9 M4.5 5.5 L8.0 6.7" stroke="#e8002d" stroke-width="1.7" stroke-linecap="round" fill="none"/></svg>
<div class="t" style="left:693.50px;top:962.85px;font-size:17.01px;color:#525a63;transform:scaleX(1.0201);">0368786277</div>
<div style="position:absolute;left:822.00px;top:970.00px;width:13.00px;height:2.00px;background:#737b83"></div>
<div class="t" style="left:953.10px;top:962.85px;font-size:17.01px;color:#25b35f;font-weight:bold;transform:scaleX(1.0044);">+150.000 đ</div>
<div class="t" style="left:1096.40px;top:962.85px;font-size:17.01px;color:#525a63;transform:scaleX(0.8636);">11.016.593</div>
<div class="t" style="left:1214.70px;top:962.85px;font-size:17.01px;color:#525a63;transform:scaleX(0.9105);">MBVCB.13709017491.528039.P…</div>
<div style="position:absolute;left:1497.00px;top:970.00px;width:13.00px;height:2.00px;background:#737b83"></div>
<div class="t" style="left:1643.20px;top:962.85px;font-size:17.01px;color:#525a63;transform:scaleX(0.9779);">FT26099080221537</div>
<div style="position:absolute;left:1833.00px;top:970.00px;width:13.00px;height:2.00px;background:#737b83"></div>
<div class="t" style="left:358.75px;top:1012.00px;font-size:17.01px;color:#525a63;transform:scaleX(0.9911);">49143552</div>
<div class="t" style="left:471.00px;top:1012.00px;font-size:17.01px;color:#525a63;transform:scaleX(1.0357);">09/04/2026 10:25:00</div>
<svg style="position:absolute;left:669.00px;top:1011.65px;" width="19" height="20" viewBox="0 0 19 20"><path d="M10.5 1.0 L8.6 4.2 M11.4 4.5 L11.2 8.7 M13.6 8.6 L17.0 9.9 M10.2 12.3 L14.3 11.3 M11.3 14.5 L11.6 18.5 M6.8 12.7 L8.8 16.2 M1.3 15.2 L4.7 14.0 M4.9 9.3 L2.9 12.6 M1.4 4.5 L3.2 7.9 M4.5 5.5 L8.0 6.7" stroke="#e8002d" stroke-width="1.7" stroke-linecap="round" fill="none"/></svg>
<div class="t" style="left:693.50px;top:1012.00px;font-size:17.01px;color:#525a63;transform:scaleX(1.0201);">0368786277</div>
<div style="position:absolute;left:822.00px;top:1019.00px;width:13.00px;height:2.00px;background:#737b83"></div>
<div class="t" style="left:953.10px;top:1012.00px;font-size:17.01px;color:#25b35f;font-weight:bold;transform:scaleX(1.0495);">+280.000 đ</div>
<div class="t" style="left:1096.40px;top:1012.00px;font-size:17.01px;color:#525a63;transform:scaleX(0.9740);">10.866.593</div>
<div class="t" style="left:1214.70px;top:1012.00px;font-size:17.01px;color:#525a63;transform:scaleX(0.9721);">124546891478-Gemini-CHUYE…</div>
<div style="position:absolute;left:1497.00px;top:1019.00px;width:13.00px;height:2.00px;background:#737b83"></div>
<div class="t" style="left:1643.20px;top:1012.00px;font-size:17.01px;color:#525a63;">FT26099419568993</div>
<div style="position:absolute;left:1833.00px;top:1019.00px;width:13.00px;height:2.00px;background:#737b83"></div>
<div class="t" style="left:358.75px;top:1061.00px;font-size:17.01px;color:#525a63;transform:scaleX(0.9911);">49090571</div>
<div class="t" style="left:471.00px;top:1061.00px;font-size:17.01px;color:#525a63;transform:scaleX(1.0633);">08/04/2026 22:55:00</div>
<svg style="position:absolute;left:669.00px;top:1060.65px;" width="19" height="20" viewBox="0 0 19 20"><path d="M10.5 1.0 L8.6 4.2 M11.4 4.5 L11.2 8.7 M13.6 8.6 L17.0 9.9 M10.2 12.3 L14.3 11.3 M11.3 14.5 L11.6 18.5 M6.8 12.7 L8.8 16.2 M1.3 15.2 L4.7 14.0 M4.9 9.3 L2.9 12.6 M1.4 4.5 L3.2 7.9 M4.5 5.5 L8.0 6.7" stroke="#e8002d" stroke-width="1.7" stroke-linecap="round" fill="none"/></svg>
<div class="t" style="left:693.50px;top:1061.00px;font-size:17.01px;color:#525a63;transform:scaleX(1.0201);">0368786277</div>
<div style="position:absolute;left:822.00px;top:1068.00px;width:13.00px;height:2.00px;background:#737b83"></div>
<div class="t" style="left:953.10px;top:1061.00px;font-size:17.01px;color:#25b35f;font-weight:bold;transform:scaleX(1.0044);">+150.000 đ</div>
<div class="t" style="left:1096.40px;top:1061.00px;font-size:17.01px;color:#525a63;transform:scaleX(0.9376);">13.735.593</div>
<div class="t" style="left:1214.70px;top:1061.00px;font-size:17.01px;color:#525a63;transform:scaleX(0.9772);">DH5GOLJ4RW Ma giao dich Tr…</div>
<div style="position:absolute;left:1497.00px;top:1068.00px;width:13.00px;height:2.00px;background:#737b83"></div>
<div class="t" style="left:1643.20px;top:1061.00px;font-size:17.01px;color:#525a63;transform:scaleX(1.0067);">FT26099257782598</div>
<div style="position:absolute;left:1833.00px;top:1068.00px;width:13.00px;height:2.00px;background:#737b83"></div>
<div style="position:absolute;left:1839px;top:1005px;width:71px;height:64px;border-radius:50%;background:conic-gradient(from 0deg,#7d6a8a,#4a8fb0,#2bc0a0,#35e8a0,#f0f0f0,#f4b63c,#f06a2a,#e8303c,#a04a6a,#7d6a8a);"></div>
<div style="position:absolute;left:1841.5px;top:1007.5px;width:66px;height:59px;border-radius:50%;background:radial-gradient(#f4f6f8,#fbfbfc)"></div>
<div style="position:absolute;left:1848.3px;top:1015px;width:44.7px;height:44.6px;border-radius:50%;background:#2d2a2c"></div>
<svg style="position:absolute;left:1856.50px;top:1023.50px;" width="28" height="28" viewBox="0 0 28 28"><path d="M14.5 2 C8 2 3.3 5.8 3.3 10.5 C3.3 13 4.5 15 6.3 16.5 L3.5 25 L10.5 20 C11.8 20.4 13 20.5 14.5 20.5 C21 20.5 25.5 16.5 25.5 11 C25.5 5.8 21 2 14.5 2 Z" stroke="#f5eeee" stroke-width="2.1" fill="none" stroke-linejoin="round"/></svg>
</body></html>
